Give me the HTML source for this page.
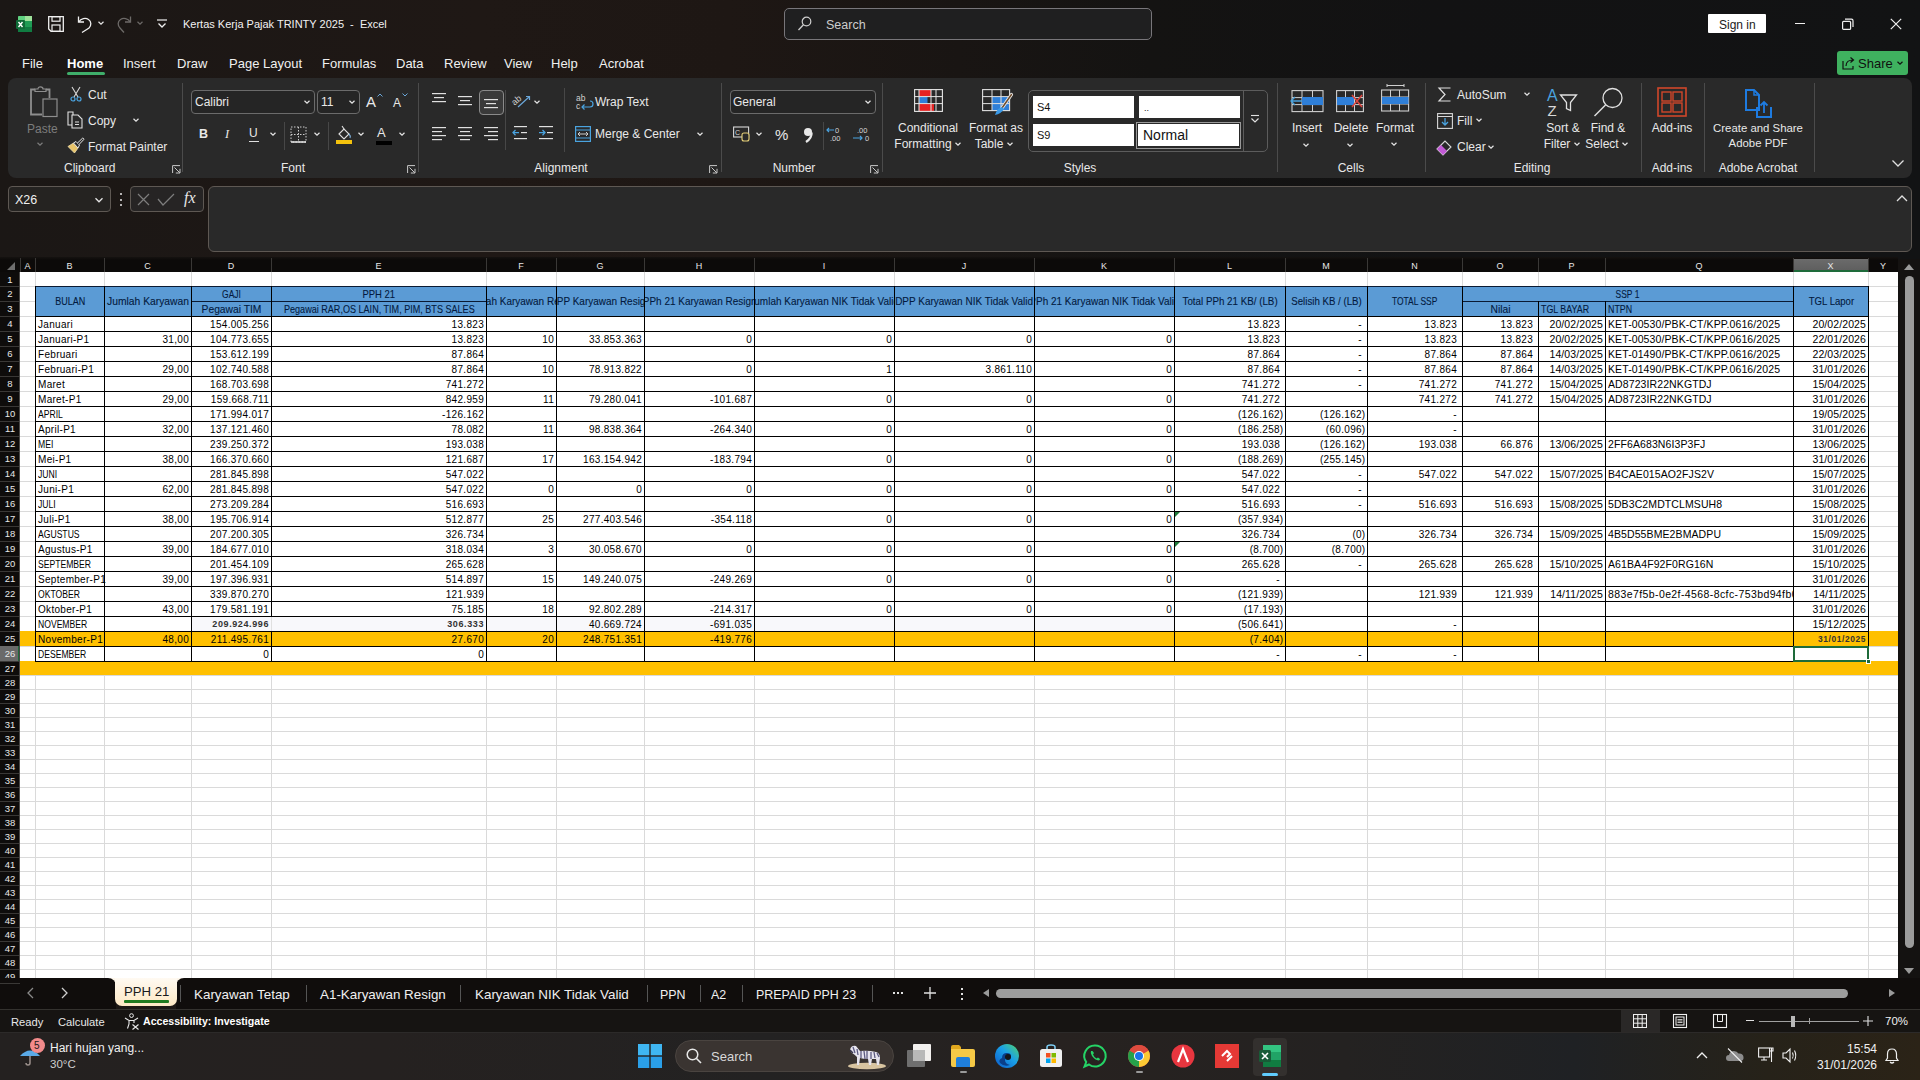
<!DOCTYPE html>
<html><head><meta charset="utf-8"><title>Excel</title>
<style>
html,body{margin:0;padding:0;}
body{width:1920px;height:1080px;overflow:hidden;position:relative;background:#1c1816;font-family:"Liberation Sans", sans-serif;}
div{position:absolute;box-sizing:border-box;}
.t{white-space:nowrap;line-height:1;}
.w{color:#ffffff;}
.c{white-space:nowrap;line-height:1;font-size:10px;letter-spacing:0.3px;color:#000;}
.ch{white-space:nowrap;line-height:1;font-size:10px;color:#e8e8e8;text-align:center;}
.rh{white-space:nowrap;line-height:1;font-size:10px;color:#e8e8e8;text-align:center;width:20px;}
svg{position:absolute;overflow:visible;}
</style></head><body>

<div style="left:0px;top:0px;width:1920px;height:1080px;background:linear-gradient(90deg,#1b1715 0%,#1f1815 25%,#1e1714 38%,#191513 50%,#141312 60%,#121213 75%,#121314 100%);"></div>
<svg style="left:16px;top:16px" width="16" height="16" viewBox="0 0 16 16"><rect x="2" y="0" width="14" height="16" rx="1.5" fill="#1f9d55"/><rect x="2" y="0" width="14" height="5" rx="1" fill="#5fd07f"/><rect x="9" y="0" width="7" height="5" fill="#9ee29a"/><rect x="2" y="11" width="14" height="5" fill="#107c41"/><rect x="0" y="4" width="9" height="9" rx="1" fill="#0f6b37"/><path d="M2.5 6L6.5 11M6.5 6L2.5 11" stroke="#fff" stroke-width="1.4"/></svg>
<svg style="left:48px;top:16px" width="16" height="16" viewBox="0 0 16 16"><path d="M0.7 0.7H15.3V15.3H3L0.7 13Z" fill="none" stroke="#f0f0f0" stroke-width="1.3"/><rect x="4" y="0.7" width="8" height="4.5" fill="none" stroke="#f0f0f0" stroke-width="1.2"/><rect x="4" y="9" width="8" height="6.3" fill="none" stroke="#f0f0f0" stroke-width="1.2"/></svg>
<svg style="left:77px;top:15px" width="16" height="18" viewBox="0 0 16 18"><path d="M1.5 1.5V7H7" fill="none" stroke="#f0f0f0" stroke-width="1.3"/><path d="M1.8 6.8C4 3.5 8.5 2.5 11.5 4.5C14.5 6.5 14.5 10.5 12 13L5 17.5" fill="none" stroke="#f0f0f0" stroke-width="1.3"/></svg>
<svg style="left:96px;top:19px" width="10" height="8" viewBox="0 0 10 8"><path d="M2.5 2.75L5 5.25L7.5 2.75" fill="none" stroke="#e6e6e6" stroke-width="1.2"/></svg>
<svg style="left:116px;top:15px" width="16" height="18" viewBox="0 0 16 18"><path d="M14.5 1.5V7H9" fill="none" stroke="#6d6a68" stroke-width="1.3"/><path d="M14.2 6.8C12 3.5 7.5 2.5 4.5 4.5C1.5 6.5 1.5 10.5 4 13L8 17.5" fill="none" stroke="#6d6a68" stroke-width="1.3"/></svg>
<svg style="left:135px;top:19px" width="10" height="8" viewBox="0 0 10 8"><path d="M2.5 2.75L5 5.25L7.5 2.75" fill="none" stroke="#6d6a68" stroke-width="1.2"/></svg>
<svg style="left:156px;top:18px" width="12" height="12" viewBox="0 0 12 12"><path d="M1 2H11" stroke="#f0f0f0" stroke-width="1.2"/><path d="M2.5 5.5L6 9L9.5 5.5" fill="none" stroke="#f0f0f0" stroke-width="1.3"/></svg>
<div class="t" style="left:183px;top:19.2px;font-size:11px;color:#f2f2f2;white-space:pre;">Kertas Kerja Pajak TRINTY 2025  -  Excel</div>
<div style="left:784px;top:8px;width:368px;height:32px;border:1px solid #78767a;border-radius:5px;background:#1f1f20;"></div>
<svg style="left:797px;top:15px" width="16" height="18" viewBox="0 0 16 18"><circle cx="9.5" cy="6.5" r="4.3" fill="none" stroke="#cfcfcf" stroke-width="1.2"/><path d="M6.4 9.8L1.5 15" stroke="#cfcfcf" stroke-width="1.3"/></svg>
<div class="t" style="left:826px;top:18.5px;font-size:12.5px;color:#cdcdcd;">Search</div>
<div style="left:1708px;top:14px;width:58px;height:19px;background:#ffffff;border-radius:1px;"></div>
<div class="t" style="left:1719px;top:19.2px;font-size:12px;color:#1a1a1a;">Sign in</div>
<div style="left:1795px;top:23px;width:10px;height:1px;background:#f0f0f0;"></div>
<svg style="left:1842px;top:18px" width="12" height="12" viewBox="0 0 12 12"><rect x="0.6" y="3.4" width="8" height="8" rx="1" fill="none" stroke="#f0f0f0" stroke-width="1.2"/><path d="M3 1.2H9.5A1.6 1.6 0 0 1 11 2.8V9" fill="none" stroke="#f0f0f0" stroke-width="1.2"/></svg>
<svg style="left:1890px;top:18px" width="12" height="12" viewBox="0 0 12 12"><path d="M0.8 0.8L11.2 11.2M11.2 0.8L0.8 11.2" stroke="#f0f0f0" stroke-width="1.2"/></svg>
<div class="t" style="left:22px;top:57.3px;font-size:13px;color:#f0f0f0;">File</div>
<div class="t" style="left:67px;top:57.3px;font-size:13px;color:#ffffff;font-weight:bold;">Home</div>
<div class="t" style="left:123px;top:57.3px;font-size:13px;color:#f0f0f0;">Insert</div>
<div class="t" style="left:177px;top:57.3px;font-size:13px;color:#f0f0f0;">Draw</div>
<div class="t" style="left:229px;top:57.3px;font-size:13px;color:#f0f0f0;">Page Layout</div>
<div class="t" style="left:322px;top:57.3px;font-size:13px;color:#f0f0f0;">Formulas</div>
<div class="t" style="left:396px;top:57.3px;font-size:13px;color:#f0f0f0;">Data</div>
<div class="t" style="left:444px;top:57.3px;font-size:13px;color:#f0f0f0;">Review</div>
<div class="t" style="left:504px;top:57.3px;font-size:13px;color:#f0f0f0;">View</div>
<div class="t" style="left:551px;top:57.3px;font-size:13px;color:#f0f0f0;">Help</div>
<div class="t" style="left:599px;top:57.3px;font-size:13px;color:#f0f0f0;">Acrobat</div>
<div style="left:67px;top:72px;width:38px;height:3px;background:#3fae6a;border-radius:2px;"></div>
<div style="left:1837px;top:51px;width:71px;height:24px;background:#3fb15f;border-radius:3px;"></div>
<svg style="left:1842px;top:56px" width="14" height="14" viewBox="0 0 14 14"><path d="M1 5V13H11V10" fill="none" stroke="#111" stroke-width="1.2"/><path d="M4 10C4 6 7 4 11 4M8.5 1.5L11.5 4L8.5 6.5" fill="none" stroke="#111" stroke-width="1.2"/></svg>
<div class="t" style="left:1858px;top:57.3px;font-size:13px;color:#101010;">Share</div>
<svg style="left:1895px;top:59px" width="10" height="8" viewBox="0 0 10 8"><path d="M2.5 2.75L5 5.25L7.5 2.75" fill="none" stroke="#111" stroke-width="1.2"/></svg>
<div style="left:8px;top:78px;width:1904px;height:100px;background:#292929;border-radius:8px;"></div>
<div style="left:182px;top:83px;width:1px;height:89px;background:#4b4b4b;"></div>
<div style="left:418px;top:83px;width:1px;height:89px;background:#4b4b4b;"></div>
<div style="left:721px;top:83px;width:1px;height:89px;background:#4b4b4b;"></div>
<div style="left:882px;top:83px;width:1px;height:89px;background:#4b4b4b;"></div>
<div style="left:1277px;top:83px;width:1px;height:89px;background:#4b4b4b;"></div>
<div style="left:1425px;top:83px;width:1px;height:89px;background:#4b4b4b;"></div>
<div style="left:1641px;top:83px;width:1px;height:89px;background:#4b4b4b;"></div>
<div style="left:1704px;top:83px;width:1px;height:89px;background:#4b4b4b;"></div>
<div style="left:1814px;top:83px;width:1px;height:89px;background:#4b4b4b;"></div>
<svg style="left:29px;top:86px" width="30" height="33" viewBox="0 0 30 33"><path d="M6 5.5V3H9Q9 0.8 11.5 0.8Q14 0.8 14 3H17V5.5Z" fill="none" stroke="#8e8e8e" stroke-width="1.2"/><path d="M6 3.5H2V28.5H13M17 3.5H20.5V12" fill="none" stroke="#8e8e8e" stroke-width="1.8"/><rect x="14" y="13" width="14" height="17.5" fill="#292929" stroke="#8e8e8e" stroke-width="1.2"/></svg>
<div class="t" style="left:27px;top:123.2px;font-size:12px;color:#7c7c7c;">Paste</div>
<svg style="left:35px;top:140px" width="10" height="8" viewBox="0 0 10 8"><path d="M2.5 2.75L5 5.25L7.5 2.75" fill="none" stroke="#7c7c7c" stroke-width="1.2"/></svg>
<svg style="left:69px;top:86px" width="14" height="16" viewBox="0 0 14 16"><path d="M3 1L9 11M11 1L5 11" stroke="#d8d8d8" stroke-width="1.1"/><circle cx="4" cy="13" r="2" fill="none" stroke="#4aa3df" stroke-width="1.2"/><circle cx="10" cy="13" r="2" fill="none" stroke="#4aa3df" stroke-width="1.2"/></svg>
<div class="t" style="left:88px;top:89.2px;font-size:12px;color:#e8e8e8;">Cut</div>
<svg style="left:67px;top:111px" width="17" height="18" viewBox="0 0 17 18"><path d="M1 1H6V14H1Z" fill="none" stroke="#e0e0e0" stroke-width="1.1"/><path d="M5 4H11L15 8V17H5Z" fill="#292929" stroke="#e0e0e0" stroke-width="1.1"/><path d="M8 11H12M8 13.5H12" stroke="#e0e0e0" stroke-width="1"/></svg>
<div class="t" style="left:88px;top:115.2px;font-size:12px;color:#e8e8e8;">Copy</div>
<svg style="left:131px;top:116px" width="10" height="8" viewBox="0 0 10 8"><path d="M2.5 2.75L5 5.25L7.5 2.75" fill="none" stroke="#e6e6e6" stroke-width="1.2"/></svg>
<svg style="left:67px;top:137px" width="18" height="17" viewBox="0 0 18 17"><path d="M1 9.5L6.5 6L11 11L7.5 16Z" fill="#e9c46a" stroke="#f0e0b0" stroke-width="0.8"/><path d="M6.5 6L9 4.5L12.5 8L11 11Z" fill="#292929" stroke="#e8e8e8" stroke-width="1"/><path d="M10.5 6L15.5 1.2Q17 1 16.8 2.5L12 7.5" fill="#292929" stroke="#e8e8e8" stroke-width="1"/></svg>
<div class="t" style="left:88px;top:141.2px;font-size:12px;color:#e8e8e8;">Format Painter</div>
<div class="t" style="left:64px;top:162.2px;font-size:12px;color:#e8e8e8;">Clipboard</div>
<svg style="left:172px;top:165px" width="9" height="9" viewBox="0 0 9 9"><path d="M0.6 8V0.6H8" fill="none" stroke="#c8c8c8" stroke-width="1"/><path d="M2.5 2.5L7.8 7.8M8 3.8V8H3.8" fill="none" stroke="#c8c8c8" stroke-width="1"/></svg>
<div style="left:191px;top:90px;width:124px;height:24px;border:1px solid #6b6b6b;border-radius:4px;background:#252525;"></div>
<div class="t" style="left:195px;top:96.2px;font-size:12px;color:#e8e8e8;">Calibri</div>
<svg style="left:302px;top:98px" width="10" height="8" viewBox="0 0 10 8"><path d="M2.5 2.75L5 5.25L7.5 2.75" fill="none" stroke="#e6e6e6" stroke-width="1.2"/></svg>
<div style="left:317px;top:90px;width:43px;height:24px;border:1px solid #6b6b6b;border-radius:4px;background:#252525;"></div>
<div class="t" style="left:321px;top:96.2px;font-size:12px;color:#e8e8e8;">11</div>
<svg style="left:347px;top:98px" width="10" height="8" viewBox="0 0 10 8"><path d="M2.5 2.75L5 5.25L7.5 2.75" fill="none" stroke="#e6e6e6" stroke-width="1.2"/></svg>
<div class="t" style="left:366px;top:93.8px;font-size:15px;color:#e8e8e8;">A</div>
<svg style="left:377px;top:93px" width="6" height="4" viewBox="0 0 6 4"><path d="M0.5 3.5L3 1L5.5 3.5" fill="none" stroke="#6aa6d8" stroke-width="1"/></svg>
<div class="t" style="left:393px;top:97.2px;font-size:12px;color:#e8e8e8;">A</div>
<svg style="left:402px;top:93px" width="6" height="4" viewBox="0 0 6 4"><path d="M0.5 0.5L3 3L5.5 0.5" fill="none" stroke="#6aa6d8" stroke-width="1"/></svg>
<div class="t" style="left:199px;top:128.0px;font-size:12.5px;color:#e8e8e8;font-weight:bold;">B</div>
<div class="t" style="left:225px;top:128.0px;font-size:12.5px;color:#e8e8e8;font-style:italic;font-family:'Liberation Serif',serif;">I</div>
<div class="t" style="left:249px;top:127.2px;font-size:12px;color:#e8e8e8;">U</div>
<div style="left:249px;top:141px;width:10px;height:1px;background:#e0e0e0;"></div>
<svg style="left:268px;top:130px" width="10" height="8" viewBox="0 0 10 8"><path d="M2.5 2.75L5 5.25L7.5 2.75" fill="none" stroke="#e6e6e6" stroke-width="1.2"/></svg>
<div style="left:284px;top:122px;width:1px;height:28px;background:#474747;"></div>
<svg style="left:290px;top:126px" width="17" height="17" viewBox="0 0 17 17"><path d="M1 1H16V16H1Z" fill="none" stroke="#cfcfcf" stroke-width="1" stroke-dasharray="1.5 1.5"/><path d="M8.5 1V16M1 8.5H16" stroke="#cfcfcf" stroke-width="1" stroke-dasharray="1.5 1.5"/><path d="M1 16H16" stroke="#e8e8e8" stroke-width="1.5"/></svg>
<svg style="left:312px;top:130px" width="10" height="8" viewBox="0 0 10 8"><path d="M2.5 2.75L5 5.25L7.5 2.75" fill="none" stroke="#e6e6e6" stroke-width="1.2"/></svg>
<div style="left:328px;top:122px;width:1px;height:28px;background:#474747;"></div>
<svg style="left:335px;top:125px" width="18" height="20" viewBox="0 0 18 20"><path d="M4 9L9 4L14 9L9 14Z" fill="none" stroke="#e0e0e0" stroke-width="1.1"/><path d="M9 4L7 1" stroke="#e0e0e0" stroke-width="1.1"/><path d="M14 9Q16 11 15 13" fill="none" stroke="#7fb3de" stroke-width="1.1"/><rect x="1" y="15" width="16" height="4" fill="#f4c20d"/></svg>
<svg style="left:356px;top:130px" width="10" height="8" viewBox="0 0 10 8"><path d="M2.5 2.75L5 5.25L7.5 2.75" fill="none" stroke="#e6e6e6" stroke-width="1.2"/></svg>
<div class="t" style="left:377px;top:125.8px;font-size:13px;color:#e8e8e8;">A</div>
<div style="left:376px;top:141px;width:16px;height:4px;background:#000000;"></div>
<svg style="left:397px;top:130px" width="10" height="8" viewBox="0 0 10 8"><path d="M2.5 2.75L5 5.25L7.5 2.75" fill="none" stroke="#e6e6e6" stroke-width="1.2"/></svg>
<div class="t" style="left:143px;width:300px;text-align:center;top:162.2px;font-size:12px;color:#e8e8e8;">Font</div>
<svg style="left:407px;top:165px" width="9" height="9" viewBox="0 0 9 9"><path d="M0.6 8V0.6H8" fill="none" stroke="#c8c8c8" stroke-width="1"/><path d="M2.5 2.5L7.8 7.8M8 3.8V8H3.8" fill="none" stroke="#c8c8c8" stroke-width="1"/></svg>
<svg style="left:432px;top:93px" width="18" height="14" viewBox="0 0 18 14"><rect x="0" y="0" width="14" height="1.2" fill="#e0e0e0"/><rect x="2" y="4" width="10" height="1.2" fill="#e0e0e0"/><rect x="0" y="8" width="14" height="1.2" fill="#e0e0e0"/></svg>
<svg style="left:458px;top:96px" width="18" height="14" viewBox="0 0 18 14"><rect x="0" y="0" width="14" height="1.2" fill="#e0e0e0"/><rect x="2" y="4" width="10" height="1.2" fill="#e0e0e0"/><rect x="0" y="8" width="14" height="1.2" fill="#e0e0e0"/></svg>
<div style="left:479px;top:90px;width:25px;height:25px;border:1px solid #8a8a8a;border-radius:4px;background:#3a3a3a;"></div>
<svg style="left:484px;top:99px" width="18" height="14" viewBox="0 0 18 14"><rect x="0" y="0" width="14" height="1.2" fill="#e0e0e0"/><rect x="2" y="4" width="10" height="1.2" fill="#e0e0e0"/><rect x="0" y="8" width="14" height="1.2" fill="#e0e0e0"/></svg>
<svg style="left:512px;top:93px" width="20" height="16" viewBox="0 0 20 16"><text x="0" y="10" font-size="9" fill="#cfcfcf" font-family="Liberation Sans" transform="rotate(-40 5 8)">ab</text><path d="M6 14L17 4M14 3.5H17.5V7" fill="none" stroke="#6aa6d8" stroke-width="1.2"/></svg>
<svg style="left:532px;top:98px" width="10" height="8" viewBox="0 0 10 8"><path d="M2.5 2.75L5 5.25L7.5 2.75" fill="none" stroke="#e6e6e6" stroke-width="1.2"/></svg>
<svg style="left:432px;top:127px" width="18" height="14" viewBox="0 0 18 14"><rect x="0" y="0" width="14" height="1.2" fill="#e0e0e0"/><rect x="0" y="4" width="10" height="1.2" fill="#e0e0e0"/><rect x="0" y="8" width="14" height="1.2" fill="#e0e0e0"/><rect x="0" y="12" width="10" height="1.2" fill="#e0e0e0"/></svg>
<svg style="left:458px;top:127px" width="18" height="14" viewBox="0 0 18 14"><rect x="0" y="0" width="14" height="1.2" fill="#e0e0e0"/><rect x="2" y="4" width="10" height="1.2" fill="#e0e0e0"/><rect x="0" y="8" width="14" height="1.2" fill="#e0e0e0"/><rect x="2" y="12" width="10" height="1.2" fill="#e0e0e0"/></svg>
<svg style="left:484px;top:127px" width="18" height="14" viewBox="0 0 18 14"><rect x="0" y="0" width="14" height="1.2" fill="#e0e0e0"/><rect x="4" y="4" width="10" height="1.2" fill="#e0e0e0"/><rect x="0" y="8" width="14" height="1.2" fill="#e0e0e0"/><rect x="4" y="12" width="10" height="1.2" fill="#e0e0e0"/></svg>
<div style="left:505px;top:90px;width:1px;height:60px;background:#474747;"></div>
<svg style="left:512px;top:126px" width="16" height="14" viewBox="0 0 16 14"><rect x="2" y="0" width="13" height="1.2" fill="#e0e0e0"/><rect x="9" y="6" width="6" height="1.2" fill="#e0e0e0"/><rect x="2" y="12" width="13" height="1.2" fill="#e0e0e0"/><path d="M7 6.6H1M3.5 4L1 6.6L3.5 9.2" fill="none" stroke="#4aa3df" stroke-width="1.3"/></svg>
<svg style="left:538px;top:126px" width="16" height="14" viewBox="0 0 16 14"><rect x="1" y="0" width="14" height="1.2" fill="#e0e0e0"/><rect x="9" y="6" width="6" height="1.2" fill="#e0e0e0"/><rect x="1" y="12" width="14" height="1.2" fill="#e0e0e0"/><path d="M1 6.6H7M4.5 4L7 6.6L4.5 9.2" fill="none" stroke="#4aa3df" stroke-width="1.3"/></svg>
<div style="left:564px;top:88px;width:1px;height:64px;background:#474747;"></div>
<svg style="left:576px;top:93px" width="18" height="17" viewBox="0 0 18 17"><text x="0" y="8" font-size="8.5" fill="#d0d0d0" font-family="Liberation Sans">ab</text><text x="0" y="16" font-size="8.5" fill="#d0d0d0" font-family="Liberation Sans">c</text><path d="M14 8Q17 8 17 11Q17 14 14 14H6M8.5 11.5L6 14L8.5 16.5" fill="none" stroke="#4aa3df" stroke-width="1.2"/></svg>
<div class="t" style="left:595px;top:96.2px;font-size:12px;color:#e8e8e8;">Wrap Text</div>
<svg style="left:575px;top:126px" width="16" height="16" viewBox="0 0 16 16"><rect x="0.6" y="0.6" width="14.8" height="14.8" fill="none" stroke="#4aa3df" stroke-width="1.2"/><path d="M0.6 4H15.4M0.6 12H15.4" stroke="#4aa3df" stroke-width="1"/><path d="M3 8H13M5 6L3 8L5 10M11 6L13 8L11 10" fill="none" stroke="#d0d0d0" stroke-width="1"/></svg>
<div class="t" style="left:595px;top:128.2px;font-size:12px;color:#e8e8e8;">Merge &amp; Center</div>
<svg style="left:695px;top:130px" width="10" height="8" viewBox="0 0 10 8"><path d="M2.5 2.75L5 5.25L7.5 2.75" fill="none" stroke="#e6e6e6" stroke-width="1.2"/></svg>
<div class="t" style="left:411px;width:300px;text-align:center;top:162.2px;font-size:12px;color:#e8e8e8;">Alignment</div>
<svg style="left:709px;top:165px" width="9" height="9" viewBox="0 0 9 9"><path d="M0.6 8V0.6H8" fill="none" stroke="#c8c8c8" stroke-width="1"/><path d="M2.5 2.5L7.8 7.8M8 3.8V8H3.8" fill="none" stroke="#c8c8c8" stroke-width="1"/></svg>
<div style="left:730px;top:90px;width:146px;height:24px;border:1px solid #6b6b6b;border-radius:4px;background:#252525;"></div>
<div class="t" style="left:733px;top:96.2px;font-size:12px;color:#e8e8e8;">General</div>
<svg style="left:863px;top:98px" width="10" height="8" viewBox="0 0 10 8"><path d="M2.5 2.75L5 5.25L7.5 2.75" fill="none" stroke="#e6e6e6" stroke-width="1.2"/></svg>
<svg style="left:733px;top:126px" width="18" height="16" viewBox="0 0 18 16"><rect x="0.6" y="1" width="15" height="10" fill="none" stroke="#d8d8d8" stroke-width="1.1"/><text x="2" y="9" font-size="7" fill="#d8d8d8" font-family="Liberation Sans">C</text><rect x="9" y="7" width="7" height="8" rx="2" fill="#292929" stroke="#e8d27a" stroke-width="1.1"/></svg>
<svg style="left:754px;top:130px" width="10" height="8" viewBox="0 0 10 8"><path d="M2.5 2.75L5 5.25L7.5 2.75" fill="none" stroke="#e6e6e6" stroke-width="1.2"/></svg>
<div class="t" style="left:775px;top:126.8px;font-size:15px;color:#e8e8e8;">%</div>
<svg style="left:802px;top:127px" width="12" height="16" viewBox="0 0 12 16"><circle cx="6" cy="5" r="4" fill="#e8e8e8"/><path d="M9.6 5.5Q10 11 4 15" fill="none" stroke="#e8e8e8" stroke-width="2.2"/></svg>
<div style="left:823px;top:122px;width:1px;height:28px;background:#474747;"></div>
<svg style="left:826px;top:126px" width="20" height="16" viewBox="0 0 20 16"><text x="9" y="7" font-size="7.5" fill="#d8d8d8" font-family="Liberation Sans">0</text><text x="4" y="15" font-size="7.5" fill="#d8d8d8" font-family="Liberation Sans">.00</text><path d="M8 4H1M3 2L1 4L3 6" fill="none" stroke="#4aa3df" stroke-width="1.2"/></svg>
<svg style="left:852px;top:126px" width="20" height="16" viewBox="0 0 20 16"><text x="5" y="7" font-size="7.5" fill="#d8d8d8" font-family="Liberation Sans">.00</text><text x="13" y="15" font-size="7.5" fill="#d8d8d8" font-family="Liberation Sans">0</text><path d="M1 12H10M8 10L10 12L8 14" fill="none" stroke="#4aa3df" stroke-width="1.2"/></svg>
<div class="t" style="left:644px;width:300px;text-align:center;top:162.2px;font-size:12px;color:#e8e8e8;">Number</div>
<svg style="left:870px;top:165px" width="9" height="9" viewBox="0 0 9 9"><path d="M0.6 8V0.6H8" fill="none" stroke="#c8c8c8" stroke-width="1"/><path d="M2.5 2.5L7.8 7.8M8 3.8V8H3.8" fill="none" stroke="#c8c8c8" stroke-width="1"/></svg>
<svg style="left:914px;top:89px" width="29" height="23" viewBox="0 0 29 23"><rect x="5" y="1" width="12" height="6.5" fill="#e52222"/><rect x="5" y="8" width="8.5" height="6.5" fill="#2f7fd8"/><rect x="5" y="15" width="15" height="7" fill="#e52222"/><rect x="0.6" y="0.6" width="27.8" height="21.8" fill="none" stroke="#e6e6e6" stroke-width="1.1"/><path d="M5 0.6V22.4M17 0.6V22.4M22 0.6V22.4M0.6 7.6H28.4M0.6 14.6H28.4" stroke="#e6e6e6" stroke-width="1"/></svg>
<div class="t" style="left:778px;width:300px;text-align:center;top:122.2px;font-size:12px;color:#e8e8e8;">Conditional</div>
<div class="t" style="left:773px;width:300px;text-align:center;top:137.7px;font-size:12px;color:#e8e8e8;">Formatting</div>
<svg style="left:953px;top:140px" width="10" height="8" viewBox="0 0 10 8"><path d="M2.5 2.75L5 5.25L7.5 2.75" fill="none" stroke="#e6e6e6" stroke-width="1.2"/></svg>
<svg style="left:982px;top:89px" width="31" height="28" viewBox="0 0 31 28"><rect x="10" y="8" width="18" height="14" fill="#2f7fd8"/><rect x="0.6" y="0.6" width="27" height="21" fill="none" stroke="#e0e0e0" stroke-width="1.1"/><path d="M10 0.6V21.6M19 0.6V21.6M0.6 7.6H27.6M0.6 14.6H27.6" stroke="#e0e0e0" stroke-width="1"/><path d="M29.5 5.5L20 19" stroke="#e8e8e8" stroke-width="3.2" stroke-linecap="round"/><path d="M29.5 5.5L20 19" stroke="#6b4a2a" stroke-width="1.4" stroke-linecap="round"/><path d="M20 18Q15 19 13 26Q19 25 22 20Z" fill="#3a9ae8"/></svg>
<div class="t" style="left:846px;width:300px;text-align:center;top:122.2px;font-size:12px;color:#e8e8e8;">Format as</div>
<div class="t" style="left:839px;width:300px;text-align:center;top:137.7px;font-size:12px;color:#e8e8e8;">Table</div>
<svg style="left:1005px;top:140px" width="10" height="8" viewBox="0 0 10 8"><path d="M2.5 2.75L5 5.25L7.5 2.75" fill="none" stroke="#e6e6e6" stroke-width="1.2"/></svg>
<div style="left:1028px;top:90px;width:240px;height:62px;border:1px solid #5c5c5c;border-radius:5px;"></div>
<div style="left:1033px;top:96px;width:101px;height:22px;background:#ffffff;"></div>
<div class="t" style="left:1037px;top:101.7px;font-size:11px;color:#111;">S4</div>
<div style="left:1139px;top:96px;width:101px;height:22px;background:#ffffff;"></div>
<div class="t" style="left:1144px;top:103.7px;font-size:9px;color:#111;">..</div>
<div style="left:1033px;top:124px;width:101px;height:22px;background:#ffffff;"></div>
<div class="t" style="left:1037px;top:129.7px;font-size:11px;color:#111;">S9</div>
<div style="left:1136px;top:122px;width:105px;height:27px;border:1px solid #9a9a9a;"></div>
<div style="left:1138px;top:124px;width:101px;height:22px;background:#ffffff;"></div>
<div class="t" style="left:1143px;top:128.3px;font-size:14px;color:#111;">Normal</div>
<div style="left:1243px;top:90px;width:1px;height:62px;background:#5c5c5c;"></div>
<svg style="left:1250px;top:114px" width="10" height="10" viewBox="0 0 10 10"><path d="M1 1.5H9" stroke="#e0e0e0" stroke-width="1.1"/><path d="M1.5 4.5L5 8L8.5 4.5" fill="none" stroke="#e0e0e0" stroke-width="1.2"/></svg>
<div class="t" style="left:930px;width:300px;text-align:center;top:162.2px;font-size:12px;color:#e8e8e8;">Styles</div>
<svg style="left:1290px;top:90px" width="34" height="22" viewBox="0 0 34 22"><rect x="2" y="0.6" width="31" height="21" fill="none" stroke="#d0d0d0" stroke-width="1.1"/><path d="M12 0.6V21.6M22.5 0.6V21.6M2 7.6H33M2 14.6H33" stroke="#d0d0d0" stroke-width="1"/><rect x="12" y="7" width="21" height="8" fill="#2f7fd8"/><path d="M12 11H1M5 7L1 11L5 15" fill="none" stroke="#4aa3df" stroke-width="1.3"/></svg>
<div class="t" style="left:1157px;width:300px;text-align:center;top:122.2px;font-size:12px;color:#e8e8e8;">Insert</div>
<svg style="left:1301px;top:141px" width="10" height="8" viewBox="0 0 10 8"><path d="M2.5 2.75L5 5.25L7.5 2.75" fill="none" stroke="#e6e6e6" stroke-width="1.2"/></svg>
<svg style="left:1336px;top:90px" width="28" height="22" viewBox="0 0 28 22"><rect x="0.6" y="0.6" width="26.8" height="21" fill="none" stroke="#d0d0d0" stroke-width="1.1"/><path d="M9.5 0.6V21.6M18.5 0.6V21.6M0.6 7.6H27.4M0.6 14.6H27.4" stroke="#d0d0d0" stroke-width="1"/><rect x="1" y="7" width="17" height="8" fill="#2f7fd8"/><path d="M16 5L26 17M26 5L16 17" stroke="#e0463f" stroke-width="1.5"/></svg>
<div class="t" style="left:1201px;width:300px;text-align:center;top:122.2px;font-size:12px;color:#e8e8e8;">Delete</div>
<svg style="left:1345px;top:141px" width="10" height="8" viewBox="0 0 10 8"><path d="M2.5 2.75L5 5.25L7.5 2.75" fill="none" stroke="#e6e6e6" stroke-width="1.2"/></svg>
<svg style="left:1381px;top:84px" width="29" height="28" viewBox="0 0 29 28"><path d="M6 1.5H23M6 0V3M23 0V3" stroke="#d0d0d0" stroke-width="1"/><rect x="0.6" y="6" width="27" height="21" fill="none" stroke="#d0d0d0" stroke-width="1.1"/><path d="M9.5 6V27M18.5 6V27M0.6 13H27.6M0.6 20H27.6" stroke="#d0d0d0" stroke-width="1"/><rect x="1" y="13" width="26.5" height="7" fill="#2f7fd8"/></svg>
<div class="t" style="left:1245px;width:300px;text-align:center;top:122.2px;font-size:12px;color:#e8e8e8;">Format</div>
<svg style="left:1389px;top:140px" width="10" height="8" viewBox="0 0 10 8"><path d="M2.5 2.75L5 5.25L7.5 2.75" fill="none" stroke="#e6e6e6" stroke-width="1.2"/></svg>
<div class="t" style="left:1201px;width:300px;text-align:center;top:162.2px;font-size:12px;color:#e8e8e8;">Cells</div>
<svg style="left:1438px;top:87px" width="14" height="15" viewBox="0 0 14 15"><path d="M12.5 1H1L7 7.5L1 14H12.5" fill="none" stroke="#e0e0e0" stroke-width="1.2"/></svg>
<div class="t" style="left:1457px;top:89.2px;font-size:12px;color:#e8e8e8;">AutoSum</div>
<svg style="left:1522px;top:90px" width="10" height="8" viewBox="0 0 10 8"><path d="M2.5 2.75L5 5.25L7.5 2.75" fill="none" stroke="#e6e6e6" stroke-width="1.2"/></svg>
<svg style="left:1437px;top:113px" width="16" height="16" viewBox="0 0 16 16"><rect x="0.6" y="0.6" width="14.8" height="14.8" fill="none" stroke="#d8d8d8" stroke-width="1.1"/><path d="M0.6 3.5H15.4" stroke="#d8d8d8" stroke-width="1"/><path d="M8 5V12M5 9L8 12L11 9" fill="none" stroke="#4aa3df" stroke-width="1.3"/></svg>
<div class="t" style="left:1457px;top:115.2px;font-size:12px;color:#e8e8e8;">Fill</div>
<svg style="left:1474px;top:116px" width="10" height="8" viewBox="0 0 10 8"><path d="M2.5 2.75L5 5.25L7.5 2.75" fill="none" stroke="#e6e6e6" stroke-width="1.2"/></svg>
<svg style="left:1436px;top:139px" width="16" height="16" viewBox="0 0 16 16"><path d="M1 10L9 2L15 8L7 16Z" fill="none" stroke="#d8d8d8" stroke-width="1.1"/><path d="M1 10L5 6L11 12L7 16Z" fill="#c25ad6"/></svg>
<div class="t" style="left:1457px;top:141.2px;font-size:12px;color:#e8e8e8;">Clear</div>
<svg style="left:1486px;top:143px" width="10" height="8" viewBox="0 0 10 8"><path d="M2.5 2.75L5 5.25L7.5 2.75" fill="none" stroke="#e6e6e6" stroke-width="1.2"/></svg>
<svg style="left:1547px;top:86px" width="32" height="31" viewBox="0 0 32 31"><text x="0" y="15" font-size="16" fill="#4aa3df" font-family="Liberation Sans">A</text><text x="0.5" y="30" font-size="15" fill="#d8d8d8" font-family="Liberation Sans">Z</text><path d="M13.5 9H29.5L23.5 16.5V24.5L19.5 22.5V16.5Z" fill="none" stroke="#e0e0e0" stroke-width="1.3"/></svg>
<div class="t" style="left:1413px;width:300px;text-align:center;top:122.2px;font-size:12px;color:#e8e8e8;">Sort &amp;</div>
<div class="t" style="left:1407px;width:300px;text-align:center;top:137.7px;font-size:12px;color:#e8e8e8;">Filter</div>
<svg style="left:1572px;top:140px" width="10" height="8" viewBox="0 0 10 8"><path d="M2.5 2.75L5 5.25L7.5 2.75" fill="none" stroke="#e6e6e6" stroke-width="1.2"/></svg>
<svg style="left:1593px;top:87px" width="32" height="31" viewBox="0 0 32 31"><circle cx="19.5" cy="11" r="9.5" fill="none" stroke="#e0e0e0" stroke-width="1.3"/><path d="M12.5 18L1.5 29" stroke="#e0e0e0" stroke-width="1.4"/></svg>
<div class="t" style="left:1458px;width:300px;text-align:center;top:122.2px;font-size:12px;color:#e8e8e8;">Find &amp;</div>
<div class="t" style="left:1452px;width:300px;text-align:center;top:137.7px;font-size:12px;color:#e8e8e8;">Select</div>
<svg style="left:1620px;top:140px" width="10" height="8" viewBox="0 0 10 8"><path d="M2.5 2.75L5 5.25L7.5 2.75" fill="none" stroke="#e6e6e6" stroke-width="1.2"/></svg>
<div class="t" style="left:1382px;width:300px;text-align:center;top:162.2px;font-size:12px;color:#e8e8e8;">Editing</div>
<svg style="left:1657px;top:87px" width="30" height="30" viewBox="0 0 30 30"><rect x="1" y="1" width="28" height="28" fill="none" stroke="#d0462a" stroke-width="1.6"/><rect x="5" y="5" width="9" height="9" fill="none" stroke="#d0462a" stroke-width="1.4"/><rect x="16" y="5" width="9" height="9" fill="none" stroke="#d0462a" stroke-width="1.4"/><rect x="5" y="16" width="9" height="9" fill="none" stroke="#d0462a" stroke-width="1.4"/><rect x="16" y="16" width="9" height="9" fill="none" stroke="#d0462a" stroke-width="1.4"/></svg>
<div class="t" style="left:1522px;width:300px;text-align:center;top:122.2px;font-size:12px;color:#e8e8e8;">Add-ins</div>
<div class="t" style="left:1522px;width:300px;text-align:center;top:162.2px;font-size:12px;color:#e8e8e8;">Add-ins</div>
<svg style="left:1744px;top:89px" width="30" height="32" viewBox="0 0 30 32"><path d="M2 1H10L15 6V21H2Z" fill="none" stroke="#1e7be0" stroke-width="2"/><path d="M10 1V6H15" fill="none" stroke="#1e7be0" stroke-width="1.5"/><path d="M13 18V28H27V18" fill="none" stroke="#1e7be0" stroke-width="2"/><path d="M20 24V13M16.5 16.5L20 13L23.5 16.5" fill="none" stroke="#1e7be0" stroke-width="1.8"/></svg>
<div class="t" style="left:1608px;width:300px;text-align:center;top:122.5px;font-size:11.4px;color:#e8e8e8;">Create and Share</div>
<div class="t" style="left:1608px;width:300px;text-align:center;top:138.0px;font-size:11.4px;color:#e8e8e8;">Adobe PDF</div>
<div class="t" style="left:1608px;width:300px;text-align:center;top:162.2px;font-size:12px;color:#e8e8e8;">Adobe Acrobat</div>
<svg style="left:1891px;top:159px" width="14" height="9" viewBox="0 0 14 9"><path d="M1.5 1.5L7 7L12.5 1.5" fill="none" stroke="#e0e0e0" stroke-width="1.3"/></svg>
<div style="left:8px;top:186px;width:103px;height:26px;border:1px solid #5e5853;border-radius:4px;background:#252321;"></div>
<div class="t" style="left:15px;top:193.5px;font-size:12.5px;color:#f0f0f0;">X26</div>
<svg style="left:94px;top:196px" width="10" height="8" viewBox="0 0 10 8"><path d="M1.5 2.25L5 5.75L8.5 2.25" fill="none" stroke="#e6e6e6" stroke-width="1.3"/></svg>
<div style="left:119.5px;top:193px;width:2px;height:2px;background:#e8e8e8;border-radius:1px;"></div>
<div style="left:119.5px;top:198.5px;width:2px;height:2px;background:#e8e8e8;border-radius:1px;"></div>
<div style="left:119.5px;top:204px;width:2px;height:2px;background:#e8e8e8;border-radius:1px;"></div>
<div style="left:130px;top:186px;width:74px;height:26px;border:1px solid #5e5853;border-radius:4px;background:#262424;"></div>
<svg style="left:137px;top:193px" width="13" height="13" viewBox="0 0 13 13"><path d="M1 1L12 12M12 1L1 12" stroke="#7d7d7d" stroke-width="1.2"/></svg>
<svg style="left:157px;top:193px" width="18" height="13" viewBox="0 0 18 13"><path d="M1 6L6 12L17 1" fill="none" stroke="#7d7d7d" stroke-width="1.2"/></svg>
<div class="t" style="left:184px;top:190.3px;font-size:16px;color:#e8e8e8;font-family:'Liberation Serif',serif;font-style:italic;">fx</div>
<div style="left:208px;top:186px;width:1704px;height:66px;border:1px solid #5e5853;border-radius:6px;background:#292929;"></div>
<svg style="left:1896px;top:194px" width="12" height="8" viewBox="0 0 12 8"><path d="M1 7L6 2L11 7" fill="none" stroke="#e0e0e0" stroke-width="1.3"/></svg>
<div style="left:100px;top:978px;width:90px;height:10px;background:#fdf6ea;"></div>
<div style="left:0px;top:978px;width:116px;height:31px;background:#100d0c;border-top-right-radius:8px;"></div>
<div style="left:176px;top:978px;width:1744px;height:31px;background:#100d0c;border-top-left-radius:8px;"></div>
<svg style="left:26px;top:987px" width="10" height="12" viewBox="0 0 10 12"><path d="M7 1L2 6L7 11" fill="none" stroke="#8a8a8a" stroke-width="1.3"/></svg>
<svg style="left:59px;top:987px" width="10" height="12" viewBox="0 0 10 12"><path d="M3 1L8 6L3 11" fill="none" stroke="#cfcfcf" stroke-width="1.3"/></svg>
<div style="left:115px;top:978px;width:62px;height:28px;background:linear-gradient(#fffaf2,#fde8c4);border-radius:0 0 7px 7px;"></div>
<div style="left:124px;top:1000px;width:45px;height:3px;background:#1f7a1f;border-radius:1px;"></div>
<div class="t" style="left:124px;top:984.7px;font-size:13.2px;color:#1a1a1a;">PPH 21</div>
<div style="left:180px;top:985px;width:1px;height:17px;background:#555;"></div>
<div class="t" style="left:194px;top:987.6px;font-size:13.4px;color:#f0f0f0;">Karyawan Tetap</div>
<div style="left:306px;top:985px;width:1px;height:17px;background:#555;"></div>
<div class="t" style="left:320px;top:987.6px;font-size:13.4px;color:#f0f0f0;">A1-Karyawan Resign</div>
<div style="left:460px;top:985px;width:1px;height:17px;background:#555;"></div>
<div class="t" style="left:475px;top:987.6px;font-size:13.4px;color:#f0f0f0;">Karyawan NIK Tidak Valid</div>
<div style="left:647px;top:985px;width:1px;height:17px;background:#555;"></div>
<div class="t" style="left:660px;top:987.6px;font-size:13.4px;color:#f0f0f0;transform:scaleX(0.93);transform-origin:0 0;">PPN</div>
<div style="left:700px;top:985px;width:1px;height:17px;background:#555;"></div>
<div class="t" style="left:711px;top:987.6px;font-size:13.4px;color:#f0f0f0;transform:scaleX(0.93);transform-origin:0 0;">A2</div>
<div style="left:742px;top:985px;width:1px;height:17px;background:#555;"></div>
<div class="t" style="left:756px;top:987.6px;font-size:13.4px;color:#f0f0f0;transform:scaleX(0.93);transform-origin:0 0;">PREPAID PPH 23</div>
<div style="left:872px;top:985px;width:1px;height:17px;background:#555;"></div>
<div style="left:893px;top:992px;width:2px;height:2px;background:#e0e0e0;"></div>
<div style="left:897px;top:992px;width:2px;height:2px;background:#e0e0e0;"></div>
<div style="left:901px;top:992px;width:2px;height:2px;background:#e0e0e0;"></div>
<svg style="left:923px;top:986px" width="14" height="14" viewBox="0 0 14 14"><path d="M7 1V13M1 7H13" stroke="#e0e0e0" stroke-width="1.3"/></svg>
<div style="left:961px;top:988px;width:2px;height:2px;background:#e0e0e0;"></div>
<div style="left:961px;top:993px;width:2px;height:2px;background:#e0e0e0;"></div>
<div style="left:961px;top:998px;width:2px;height:2px;background:#e0e0e0;"></div>
<svg style="left:982px;top:988px" width="8" height="10" viewBox="0 0 8 10"><path d="M7 1L1 5L7 9Z" fill="#9a9a9a"/></svg>
<div style="left:996px;top:989px;width:852px;height:9px;background:#9d9d9d;border-radius:5px;"></div>
<svg style="left:1888px;top:988px" width="8" height="10" viewBox="0 0 8 10"><path d="M1 1L7 5L1 9Z" fill="#9a9a9a"/></svg>
<div style="left:0px;top:1009px;width:1920px;height:23px;background:#161412;border-top:1px solid #34322f;"></div>
<div class="t" style="left:11px;top:1016.9px;font-size:11.2px;color:#e8e8e8;">Ready</div>
<div class="t" style="left:58px;top:1016.9px;font-size:11.2px;color:#e8e8e8;">Calculate</div>
<svg style="left:124px;top:1013px" width="16" height="17" viewBox="0 0 16 17"><circle cx="7.5" cy="2.6" r="1.9" fill="none" stroke="#e8e8e8" stroke-width="1"/><path d="M1 5L5 7.5H10L14 5M5 7.5V11L3.5 15.5M10 7.5V10" fill="none" stroke="#e8e8e8" stroke-width="1.1"/><path d="M8.5 11.5L14.5 16.5M14.5 11.5L8.5 16.5" stroke="#e8e8e8" stroke-width="1.1"/></svg>
<div class="t" style="left:143px;top:1016.4px;font-size:10.6px;color:#ffffff;font-weight:bold;">Accessibility: Investigate</div>
<div style="left:1621px;top:1010px;width:39px;height:22px;background:#2a2827;"></div>
<svg style="left:1633px;top:1014px" width="14" height="14" viewBox="0 0 14 14"><rect x="0.5" y="0.5" width="13" height="13" fill="none" stroke="#f0f0f0" stroke-width="1"/><path d="M4.8 0.5V13.5M9.2 0.5V13.5M0.5 4.8H13.5M0.5 9.2H13.5" stroke="#f0f0f0" stroke-width="1"/></svg>
<svg style="left:1673px;top:1014px" width="14" height="14" viewBox="0 0 14 14"><rect x="0.5" y="0.5" width="13" height="13" fill="none" stroke="#f0f0f0" stroke-width="1.1"/><rect x="3" y="3" width="8" height="8" fill="none" stroke="#f0f0f0" stroke-width="1"/><path d="M4.5 5.5H9.5M4.5 7H9.5M4.5 8.5H9.5" stroke="#f0f0f0" stroke-width="0.8"/></svg>
<svg style="left:1713px;top:1014px" width="14" height="14" viewBox="0 0 14 14"><rect x="0.5" y="0.5" width="13" height="13" fill="none" stroke="#f0f0f0" stroke-width="1.1"/><path d="M4.5 0.5V7.5H9.5V0.5" fill="none" stroke="#f0f0f0" stroke-width="1"/></svg>
<div style="left:1746px;top:1020px;width:8px;height:1px;background:#e0e0e0;"></div>
<div style="left:1759px;top:1021px;width:100px;height:1px;background:#a0a0a0;"></div>
<div style="left:1791px;top:1016px;width:4px;height:11px;background:#b8b8b8;"></div>
<div style="left:1809px;top:1018px;width:1px;height:6px;background:#a0a0a0;"></div>
<svg style="left:1863px;top:1016px" width="10" height="10" viewBox="0 0 10 10"><path d="M5 0V10M0 5H10" stroke="#e0e0e0" stroke-width="1.1"/></svg>
<div class="t" style="left:1885px;top:1015.5px;font-size:11.5px;color:#f0f0f0;">70%</div>
<div style="left:0px;top:1032px;width:1920px;height:48px;background:linear-gradient(90deg,#242120 0%,#252120 20%,#232222 40%,#272220 55%,#242221 70%,#1f2124 82%,#262219 92%,#2b2317 100%);border-top:1px solid #2c2a29;"></div>
<svg style="left:18px;top:1044px" width="24" height="24" viewBox="0 0 24 24"><path d="M2 12Q12 1 22 12Z" fill="#5aa9e6"/><path d="M12 12V19Q12 21 10 21Q8 21 8 19" fill="none" stroke="#9a8f8a" stroke-width="1.5"/></svg>
<div style="left:30px;top:1038px;width:15px;height:15px;border-radius:50%;background:#f28b8b;"></div>
<div class="t" style="left:34px;top:1040.7px;font-size:10px;color:#1a1a1a;">5</div>
<div class="t" style="left:50px;top:1042.2px;font-size:12px;color:#f0f0f0;">Hari hujan yang...</div>
<div class="t" style="left:50px;top:1058.5px;font-size:11.5px;color:#cfcfcf;">30°C</div>
<svg style="left:638px;top:1044px" width="24" height="24" viewBox="0 0 24 24"><rect x="0" y="0" width="11.3" height="11.3" fill="#3fb6f2"/><rect x="12.7" y="0" width="11.3" height="11.3" fill="#3fb6f2"/><rect x="0" y="12.7" width="11.3" height="11.3" fill="#2a9fe8"/><rect x="12.7" y="12.7" width="11.3" height="11.3" fill="#2a9fe8"/></svg>
<div style="left:675px;top:1040px;width:219px;height:32px;background:#3a3431;border-radius:16px;border:1px solid #4a4440;"></div>
<svg style="left:686px;top:1048px" width="16" height="16" viewBox="0 0 16 16"><circle cx="6.5" cy="6.5" r="5.3" fill="none" stroke="#e8e8e8" stroke-width="1.5"/><path d="M10.5 10.5L15 15" stroke="#e8e8e8" stroke-width="1.6"/></svg>
<div class="t" style="left:711px;top:1050.3px;font-size:13px;color:#d8d8d8;">Search</div>
<svg style="left:844px;top:1041px" width="48" height="29" viewBox="0 0 48 29"><ellipse cx="23" cy="25" rx="19" ry="3.2" fill="#d8c4a0"/><path d="M6 9Q7 4 12 5L16 10Q24 9 32 11Q36 12 36 17L35 24H33L32 18L28 18L27 24H25L24 18Q19 18 16 17L15 24H13L13 16Q10 13 8 12Z" fill="#e6e4ee"/><path d="M9 6L11 12M13 8L14 14M17 10L17 17M20 10L21 18M23 10L23 18M27 11L27 18M30 11L31 17M33 12L35 16" stroke="#5d5a80" stroke-width="1.3"/><path d="M6 9L9 12" stroke="#3a3850" stroke-width="1.5"/></svg>
<svg style="left:906px;top:1043px" width="28" height="26" viewBox="0 0 28 26"><rect x="1" y="7" width="18" height="17" rx="1" fill="#6f6f6f"/><rect x="7" y="1" width="18" height="17" rx="1" fill="#f2f0ee"/><rect x="7" y="7" width="12" height="11" fill="#b8b8b8"/></svg>
<svg style="left:950px;top:1044px" width="26" height="24" viewBox="0 0 26 24"><path d="M1 3Q1 1 3 1H9L11 3V6H1Z" fill="#e0a81e"/><path d="M1 5H23Q25 5 25 7V21Q25 23 23 23H3Q1 23 1 21Z" fill="#f6c946"/><path d="M6 15Q6 13 8 13H18Q20 13 20 15V23H6Z" fill="#1f7fdc"/></svg>
<div style="left:960px;top:1071px;width:7px;height:2px;background:#9a9a9a;border-radius:1px;"></div>
<svg style="left:994px;top:1043px" width="26" height="26" viewBox="0 0 26 26"><defs><linearGradient id="eg" x1="0" y1="1" x2="1" y2="0"><stop offset="0" stop-color="#0c59c8"/><stop offset="0.55" stop-color="#1aa0e8"/><stop offset="1" stop-color="#52d66a"/></linearGradient></defs><circle cx="13" cy="13" r="12" fill="url(#eg)"/><path d="M8 15Q8 10 13 10Q17 10 17 13Q17 15 14 15Q11 15 11 17Q11 21 16 22Q10 24 6 20Q4 17 8 15Z" fill="#0a3f8a"/><circle cx="14" cy="14" r="3" fill="#14161a"/></svg>
<svg style="left:1039px;top:1044px" width="24" height="24" viewBox="0 0 24 24"><path d="M8 5V3Q8 1 12 1Q16 1 16 3V5" fill="none" stroke="#7fd0f7" stroke-width="1.5"/><rect x="1" y="5" width="22" height="18" rx="2.5" fill="#f0f0f0"/><rect x="7" y="9" width="4.5" height="4.5" fill="#f25022"/><rect x="12.5" y="9" width="4.5" height="4.5" fill="#7fba00"/><rect x="7" y="14.5" width="4.5" height="4.5" fill="#00a4ef"/><rect x="12.5" y="14.5" width="4.5" height="4.5" fill="#ffb900"/></svg>
<svg style="left:1083px;top:1044px" width="24" height="24" viewBox="0 0 24 24"><path d="M12 1.5A10.5 10.5 0 1 1 6 20.5L1.5 22.5L3.2 18A10.5 10.5 0 0 1 12 1.5Z" fill="none" stroke="#25d366" stroke-width="2"/><path d="M8 7Q7 9 9 12Q12 16 15.5 16.5Q17 16 17 15L15 13.5L13.5 14.5Q11 13 10 10.5L11 9L9.5 7Z" fill="#25d366"/></svg>
<svg style="left:1127px;top:1044px" width="24" height="24" viewBox="0 0 24 24"><circle cx="12" cy="12" r="11" fill="#dd4b3e"/><path d="M12 12L2.5 6.5A11 11 0 0 0 12 23Z" fill="#25a24a"/><path d="M12 12L12 23A11 11 0 0 0 21.5 6.5Z" fill="#fcc934"/><path d="M12 12L21.5 6.5A11 11 0 0 0 2.5 6.5Z" fill="#dd4b3e"/><circle cx="12" cy="12" r="5" fill="#fff"/><circle cx="12" cy="12" r="4" fill="#1a73e8"/></svg>
<div style="left:1136px;top:1071px;width:7px;height:2px;background:#9a9a9a;border-radius:1px;"></div>
<svg style="left:1171px;top:1044px" width="24" height="24" viewBox="0 0 24 24"><circle cx="12" cy="12" r="11.5" fill="#e8363f"/><path d="M7 18L12 5L17 18" fill="none" stroke="#fff" stroke-width="2.2"/></svg>
<svg style="left:1215px;top:1044px" width="24" height="24" viewBox="0 0 24 24"><rect x="0" y="0" width="24" height="24" fill="#e53935"/><path d="M7 12L12 7L15 10L12 13M12 17L17 12" fill="none" stroke="#fff" stroke-width="2"/></svg>
<div style="left:1253px;top:1038px;width:34px;height:38px;background:#33302e;border-radius:4px;"></div>
<svg style="left:1258px;top:1044px" width="24" height="24" viewBox="0 0 24 24"><rect x="5" y="1" width="18" height="22" rx="2" fill="#21a366"/><rect x="5" y="1" width="18" height="7" fill="#33c481"/><rect x="5" y="16" width="18" height="7" fill="#107c41"/><rect x="1" y="6" width="12" height="12" rx="1.5" fill="#185c37"/><path d="M4 9L10 15M10 9L4 15" stroke="#fff" stroke-width="1.6"/></svg>
<div style="left:1262px;top:1073px;width:16px;height:3px;background:#60cdff;border-radius:2px;"></div>
<svg style="left:1696px;top:1051px" width="12" height="8" viewBox="0 0 12 8"><path d="M1 7L6 2L11 7" fill="none" stroke="#f0f0f0" stroke-width="1.3"/></svg>
<svg style="left:1725px;top:1047px" width="20" height="17" viewBox="0 0 20 17"><path d="M4 14Q1 14 1 11Q1 8 4 8Q5 4 9 4Q12 4 13.5 6.5Q18 6 18.5 10Q19 14 15 14Z" fill="#8c8c8c"/><path d="M3 1.5L17 15.5" stroke="#f0f0f0" stroke-width="1.1"/></svg>
<svg style="left:1758px;top:1047px" width="17" height="17" viewBox="0 0 17 17"><rect x="0.6" y="1" width="11" height="9" fill="none" stroke="#f0f0f0" stroke-width="1.1"/><path d="M6 10V13M3 13H9M13.5 1V15M12 1H15V4H12" fill="none" stroke="#f0f0f0" stroke-width="1.1"/></svg>
<svg style="left:1782px;top:1047px" width="17" height="17" viewBox="0 0 17 17"><path d="M1 6H4L8 2V15L4 11H1Z" fill="none" stroke="#f0f0f0" stroke-width="1.1"/><path d="M10.5 5.5Q12 8.5 10.5 11.5M12.5 3.5Q15 8.5 12.5 13.5" fill="none" stroke="#f0f0f0" stroke-width="1.1"/></svg>
<div class="t" style="left:1800px;width:77px;text-align:right;top:1042.5px;font-size:12px;color:#f0f0f0;">15:54</div>
<div class="t" style="left:1800px;width:77px;text-align:right;top:1058.5px;font-size:12px;color:#f0f0f0;">31/01/2026</div>
<svg style="left:1885px;top:1048px" width="14" height="16" viewBox="0 0 14 16"><path d="M7 1Q2.5 1 2.5 6V10L1 12.5H13L11.5 10V6Q11.5 1 7 1Z" fill="none" stroke="#f0f0f0" stroke-width="1.2"/><path d="M5 14Q7 16 9 14" fill="none" stroke="#f0f0f0" stroke-width="1.2"/></svg>
<div style="left:0px;top:257px;width:1898px;height:15px;background:linear-gradient(#151210,#0c0a09 3px);"></div>
<div style="left:0px;top:272px;width:20px;height:706px;background:#0e0c0b;"></div>
<div style="left:20px;top:272px;width:1878px;height:706px;background:#ffffff;"></div>
<svg style="left:0;top:0" width="1920" height="1080" viewBox="0 0 1920 1080"><line x1="35.5" y1="272" x2="35.5" y2="978" stroke="#dadada" stroke-width="1"/><line x1="104.5" y1="272" x2="104.5" y2="978" stroke="#dadada" stroke-width="1"/><line x1="191.5" y1="272" x2="191.5" y2="978" stroke="#dadada" stroke-width="1"/><line x1="271.5" y1="272" x2="271.5" y2="978" stroke="#dadada" stroke-width="1"/><line x1="486.5" y1="272" x2="486.5" y2="978" stroke="#dadada" stroke-width="1"/><line x1="556.5" y1="272" x2="556.5" y2="978" stroke="#dadada" stroke-width="1"/><line x1="644.5" y1="272" x2="644.5" y2="978" stroke="#dadada" stroke-width="1"/><line x1="754.5" y1="272" x2="754.5" y2="978" stroke="#dadada" stroke-width="1"/><line x1="894.5" y1="272" x2="894.5" y2="978" stroke="#dadada" stroke-width="1"/><line x1="1034.5" y1="272" x2="1034.5" y2="978" stroke="#dadada" stroke-width="1"/><line x1="1174.5" y1="272" x2="1174.5" y2="978" stroke="#dadada" stroke-width="1"/><line x1="1285.5" y1="272" x2="1285.5" y2="978" stroke="#dadada" stroke-width="1"/><line x1="1367.5" y1="272" x2="1367.5" y2="978" stroke="#dadada" stroke-width="1"/><line x1="1462.5" y1="272" x2="1462.5" y2="978" stroke="#dadada" stroke-width="1"/><line x1="1538.5" y1="272" x2="1538.5" y2="978" stroke="#dadada" stroke-width="1"/><line x1="1605.5" y1="272" x2="1605.5" y2="978" stroke="#dadada" stroke-width="1"/><line x1="1793.5" y1="272" x2="1793.5" y2="978" stroke="#dadada" stroke-width="1"/><line x1="1868.5" y1="272" x2="1868.5" y2="978" stroke="#dadada" stroke-width="1"/><line x1="1898.5" y1="272" x2="1898.5" y2="978" stroke="#dadada" stroke-width="1"/><line x1="20" y1="286.5" x2="1898" y2="286.5" stroke="#dadada" stroke-width="1"/><line x1="20" y1="301.5" x2="1898" y2="301.5" stroke="#dadada" stroke-width="1"/><line x1="20" y1="316.5" x2="1898" y2="316.5" stroke="#dadada" stroke-width="1"/><line x1="20" y1="331.5" x2="1898" y2="331.5" stroke="#dadada" stroke-width="1"/><line x1="20" y1="346.5" x2="1898" y2="346.5" stroke="#dadada" stroke-width="1"/><line x1="20" y1="361.5" x2="1898" y2="361.5" stroke="#dadada" stroke-width="1"/><line x1="20" y1="376.5" x2="1898" y2="376.5" stroke="#dadada" stroke-width="1"/><line x1="20" y1="391.5" x2="1898" y2="391.5" stroke="#dadada" stroke-width="1"/><line x1="20" y1="406.5" x2="1898" y2="406.5" stroke="#dadada" stroke-width="1"/><line x1="20" y1="421.5" x2="1898" y2="421.5" stroke="#dadada" stroke-width="1"/><line x1="20" y1="436.5" x2="1898" y2="436.5" stroke="#dadada" stroke-width="1"/><line x1="20" y1="451.5" x2="1898" y2="451.5" stroke="#dadada" stroke-width="1"/><line x1="20" y1="466.5" x2="1898" y2="466.5" stroke="#dadada" stroke-width="1"/><line x1="20" y1="481.5" x2="1898" y2="481.5" stroke="#dadada" stroke-width="1"/><line x1="20" y1="496.5" x2="1898" y2="496.5" stroke="#dadada" stroke-width="1"/><line x1="20" y1="511.5" x2="1898" y2="511.5" stroke="#dadada" stroke-width="1"/><line x1="20" y1="526.5" x2="1898" y2="526.5" stroke="#dadada" stroke-width="1"/><line x1="20" y1="541.5" x2="1898" y2="541.5" stroke="#dadada" stroke-width="1"/><line x1="20" y1="556.5" x2="1898" y2="556.5" stroke="#dadada" stroke-width="1"/><line x1="20" y1="571.5" x2="1898" y2="571.5" stroke="#dadada" stroke-width="1"/><line x1="20" y1="586.5" x2="1898" y2="586.5" stroke="#dadada" stroke-width="1"/><line x1="20" y1="601.5" x2="1898" y2="601.5" stroke="#dadada" stroke-width="1"/><line x1="20" y1="616.5" x2="1898" y2="616.5" stroke="#dadada" stroke-width="1"/><line x1="20" y1="631.5" x2="1898" y2="631.5" stroke="#dadada" stroke-width="1"/><line x1="20" y1="646.5" x2="1898" y2="646.5" stroke="#dadada" stroke-width="1"/><line x1="20" y1="661.5" x2="1898" y2="661.5" stroke="#dadada" stroke-width="1"/><line x1="20" y1="675.5" x2="1898" y2="675.5" stroke="#dadada" stroke-width="1"/><line x1="20" y1="689.5" x2="1898" y2="689.5" stroke="#dadada" stroke-width="1"/><line x1="20" y1="703.5" x2="1898" y2="703.5" stroke="#dadada" stroke-width="1"/><line x1="20" y1="717.5" x2="1898" y2="717.5" stroke="#dadada" stroke-width="1"/><line x1="20" y1="731.5" x2="1898" y2="731.5" stroke="#dadada" stroke-width="1"/><line x1="20" y1="745.5" x2="1898" y2="745.5" stroke="#dadada" stroke-width="1"/><line x1="20" y1="759.5" x2="1898" y2="759.5" stroke="#dadada" stroke-width="1"/><line x1="20" y1="773.5" x2="1898" y2="773.5" stroke="#dadada" stroke-width="1"/><line x1="20" y1="787.5" x2="1898" y2="787.5" stroke="#dadada" stroke-width="1"/><line x1="20" y1="801.5" x2="1898" y2="801.5" stroke="#dadada" stroke-width="1"/><line x1="20" y1="815.5" x2="1898" y2="815.5" stroke="#dadada" stroke-width="1"/><line x1="20" y1="829.5" x2="1898" y2="829.5" stroke="#dadada" stroke-width="1"/><line x1="20" y1="843.5" x2="1898" y2="843.5" stroke="#dadada" stroke-width="1"/><line x1="20" y1="857.5" x2="1898" y2="857.5" stroke="#dadada" stroke-width="1"/><line x1="20" y1="871.5" x2="1898" y2="871.5" stroke="#dadada" stroke-width="1"/><line x1="20" y1="885.5" x2="1898" y2="885.5" stroke="#dadada" stroke-width="1"/><line x1="20" y1="899.5" x2="1898" y2="899.5" stroke="#dadada" stroke-width="1"/><line x1="20" y1="913.5" x2="1898" y2="913.5" stroke="#dadada" stroke-width="1"/><line x1="20" y1="927.5" x2="1898" y2="927.5" stroke="#dadada" stroke-width="1"/><line x1="20" y1="941.5" x2="1898" y2="941.5" stroke="#dadada" stroke-width="1"/><line x1="20" y1="955.5" x2="1898" y2="955.5" stroke="#dadada" stroke-width="1"/><line x1="20" y1="969.5" x2="1898" y2="969.5" stroke="#dadada" stroke-width="1"/></svg>
<div style="left:191px;top:616px;width:983px;height:15px;background:#f8f8fb;"></div>
<div style="left:20px;top:631px;width:1878px;height:15px;background:#ffc000;"></div>
<div style="left:20px;top:661px;width:1878px;height:14px;background:#ffc000;"></div>
<div style="left:35px;top:286px;width:1833px;height:30px;background:#5b9bd5;"></div>
<svg style="left:0;top:0" width="1920" height="1080" viewBox="0 0 1920 1080"><line x1="35" y1="286.5" x2="1868" y2="286.5" stroke="#0a1a33" stroke-width="1"/><line x1="35" y1="316.5" x2="1868" y2="316.5" stroke="#000" stroke-width="1"/><line x1="35" y1="331.5" x2="1868" y2="331.5" stroke="#000" stroke-width="1"/><line x1="35" y1="346.5" x2="1868" y2="346.5" stroke="#000" stroke-width="1"/><line x1="35" y1="361.5" x2="1868" y2="361.5" stroke="#000" stroke-width="1"/><line x1="35" y1="376.5" x2="1868" y2="376.5" stroke="#000" stroke-width="1"/><line x1="35" y1="391.5" x2="1868" y2="391.5" stroke="#000" stroke-width="1"/><line x1="35" y1="406.5" x2="1868" y2="406.5" stroke="#000" stroke-width="1"/><line x1="35" y1="421.5" x2="1868" y2="421.5" stroke="#000" stroke-width="1"/><line x1="35" y1="436.5" x2="1868" y2="436.5" stroke="#000" stroke-width="1"/><line x1="35" y1="451.5" x2="1868" y2="451.5" stroke="#000" stroke-width="1"/><line x1="35" y1="466.5" x2="1868" y2="466.5" stroke="#000" stroke-width="1"/><line x1="35" y1="481.5" x2="1868" y2="481.5" stroke="#000" stroke-width="1"/><line x1="35" y1="496.5" x2="1868" y2="496.5" stroke="#000" stroke-width="1"/><line x1="35" y1="511.5" x2="1868" y2="511.5" stroke="#000" stroke-width="1"/><line x1="35" y1="526.5" x2="1868" y2="526.5" stroke="#000" stroke-width="1"/><line x1="35" y1="541.5" x2="1868" y2="541.5" stroke="#000" stroke-width="1"/><line x1="35" y1="556.5" x2="1868" y2="556.5" stroke="#000" stroke-width="1"/><line x1="35" y1="571.5" x2="1868" y2="571.5" stroke="#000" stroke-width="1"/><line x1="35" y1="586.5" x2="1868" y2="586.5" stroke="#000" stroke-width="1"/><line x1="35" y1="601.5" x2="1868" y2="601.5" stroke="#000" stroke-width="1"/><line x1="35" y1="616.5" x2="1868" y2="616.5" stroke="#000" stroke-width="1"/><line x1="35" y1="631.5" x2="1868" y2="631.5" stroke="#000" stroke-width="1"/><line x1="35" y1="646.5" x2="1868" y2="646.5" stroke="#000" stroke-width="1"/><line x1="35" y1="661.5" x2="1868" y2="661.5" stroke="#000" stroke-width="1"/><line x1="191" y1="301.5" x2="486" y2="301.5" stroke="#0a1a33" stroke-width="1"/><line x1="1462" y1="301.5" x2="1793" y2="301.5" stroke="#0a1a33" stroke-width="1"/><line x1="35.5" y1="286" x2="35.5" y2="662" stroke="#000" stroke-width="1"/><line x1="104.5" y1="286" x2="104.5" y2="662" stroke="#000" stroke-width="1"/><line x1="191.5" y1="286" x2="191.5" y2="662" stroke="#000" stroke-width="1"/><line x1="271.5" y1="286" x2="271.5" y2="662" stroke="#000" stroke-width="1"/><line x1="486.5" y1="286" x2="486.5" y2="662" stroke="#000" stroke-width="1"/><line x1="556.5" y1="286" x2="556.5" y2="662" stroke="#000" stroke-width="1"/><line x1="644.5" y1="286" x2="644.5" y2="662" stroke="#000" stroke-width="1"/><line x1="754.5" y1="286" x2="754.5" y2="662" stroke="#000" stroke-width="1"/><line x1="894.5" y1="286" x2="894.5" y2="662" stroke="#000" stroke-width="1"/><line x1="1034.5" y1="286" x2="1034.5" y2="662" stroke="#000" stroke-width="1"/><line x1="1174.5" y1="286" x2="1174.5" y2="662" stroke="#000" stroke-width="1"/><line x1="1285.5" y1="286" x2="1285.5" y2="662" stroke="#000" stroke-width="1"/><line x1="1367.5" y1="286" x2="1367.5" y2="662" stroke="#000" stroke-width="1"/><line x1="1462.5" y1="286" x2="1462.5" y2="662" stroke="#000" stroke-width="1"/><line x1="1538.5" y1="301" x2="1538.5" y2="662" stroke="#000" stroke-width="1"/><line x1="1605.5" y1="301" x2="1605.5" y2="662" stroke="#000" stroke-width="1"/><line x1="1793.5" y1="286" x2="1793.5" y2="662" stroke="#000" stroke-width="1"/><line x1="1868.5" y1="286" x2="1868.5" y2="662" stroke="#000" stroke-width="1"/></svg>
<div style="left:271px;top:617px;width:1px;height:14px;background:#e0e0e0;"></div>
<div style="left:36px;top:287px;width:68px;height:29px;overflow:hidden;color:#031a40;font-size:10.3px;letter-spacing:0px;line-height:29px;white-space:nowrap;-webkit-text-stroke:0.1px #031a40;display:flex;justify-content:center;"><span style="display:inline-block;transform:scaleX(0.875);">BULAN</span></div>
<div style="left:105px;top:287px;width:86px;height:29px;overflow:hidden;color:#031a40;font-size:10.3px;letter-spacing:0px;line-height:29px;white-space:nowrap;-webkit-text-stroke:0.1px #031a40;display:flex;justify-content:center;"><span style="display:inline-block;transform:scaleX(1.0);">Jumlah Karyawan</span></div>
<div style="left:192px;top:288px;width:79px;height:14px;overflow:hidden;color:#031a40;font-size:10.3px;letter-spacing:0px;line-height:14px;white-space:nowrap;-webkit-text-stroke:0.1px #031a40;display:flex;justify-content:center;"><span style="display:inline-block;transform:scaleX(0.82);">GAJI</span></div>
<div style="left:192px;top:303px;width:79px;height:14px;overflow:hidden;color:#031a40;font-size:10.3px;letter-spacing:0px;line-height:14px;white-space:nowrap;-webkit-text-stroke:0.1px #031a40;display:flex;justify-content:center;"><span style="display:inline-block;transform:scaleX(1.0);">Pegawai TIM</span></div>
<div style="left:272px;top:288px;width:214px;height:14px;overflow:hidden;color:#031a40;font-size:10.3px;letter-spacing:0px;line-height:14px;white-space:nowrap;-webkit-text-stroke:0.1px #031a40;display:flex;justify-content:center;"><span style="display:inline-block;transform:scaleX(0.92);">PPH 21</span></div>
<div style="left:272px;top:303px;width:214px;height:14px;overflow:hidden;color:#031a40;font-size:10.3px;letter-spacing:0px;line-height:14px;white-space:nowrap;-webkit-text-stroke:0.1px #031a40;display:flex;justify-content:center;"><span style="display:inline-block;transform:scaleX(0.88);">Pegawai RAR,OS LAIN, TIM, PIM, BTS SALES</span></div>
<div style="left:487px;top:287px;width:69px;height:29px;overflow:hidden;color:#031a40;font-size:10.3px;letter-spacing:0px;line-height:29px;white-space:nowrap;-webkit-text-stroke:0.1px #031a40;display:flex;justify-content:center;"><span style="display:inline-block;transform:scaleX(0.97);">Jumlah Karyawan Resign</span></div>
<div style="left:557px;top:287px;width:87px;height:29px;overflow:hidden;color:#031a40;font-size:10.3px;letter-spacing:0px;line-height:29px;white-space:nowrap;-webkit-text-stroke:0.1px #031a40;display:flex;justify-content:center;"><span style="display:inline-block;transform:scaleX(0.97);">DPP Karyawan Resign</span></div>
<div style="left:645px;top:287px;width:109px;height:29px;overflow:hidden;color:#031a40;font-size:10.3px;letter-spacing:0px;line-height:29px;white-space:nowrap;-webkit-text-stroke:0.1px #031a40;display:flex;justify-content:center;"><span style="display:inline-block;transform:scaleX(0.97);">PPh 21 Karyawan Resign</span></div>
<div style="left:755px;top:287px;width:139px;height:29px;overflow:hidden;color:#031a40;font-size:10.3px;letter-spacing:0px;line-height:29px;white-space:nowrap;-webkit-text-stroke:0.1px #031a40;display:flex;justify-content:center;"><span style="display:inline-block;transform:scaleX(0.97);">Jumlah Karyawan NIK Tidak Valid</span></div>
<div style="left:895px;top:287px;width:139px;height:29px;overflow:hidden;color:#031a40;font-size:10.3px;letter-spacing:0px;line-height:29px;white-space:nowrap;-webkit-text-stroke:0.1px #031a40;display:flex;justify-content:center;"><span style="display:inline-block;transform:scaleX(0.97);">DPP Karyawan NIK Tidak Valid</span></div>
<div style="left:1035px;top:287px;width:139px;height:29px;overflow:hidden;color:#031a40;font-size:10.3px;letter-spacing:0px;line-height:29px;white-space:nowrap;-webkit-text-stroke:0.1px #031a40;display:flex;justify-content:center;"><span style="display:inline-block;transform:scaleX(0.97);">PPh 21 Karyawan NIK Tidak Valid</span></div>
<div style="left:1175px;top:287px;width:110px;height:29px;overflow:hidden;color:#031a40;font-size:10.3px;letter-spacing:0px;line-height:29px;white-space:nowrap;-webkit-text-stroke:0.1px #031a40;display:flex;justify-content:center;"><span style="display:inline-block;transform:scaleX(0.95);">Total PPh 21 KB/ (LB)</span></div>
<div style="left:1286px;top:287px;width:81px;height:29px;overflow:hidden;color:#031a40;font-size:10.3px;letter-spacing:0px;line-height:29px;white-space:nowrap;-webkit-text-stroke:0.1px #031a40;display:flex;justify-content:center;"><span style="display:inline-block;transform:scaleX(0.94);">Selisih KB / (LB)</span></div>
<div style="left:1368px;top:287px;width:94px;height:29px;overflow:hidden;color:#031a40;font-size:10.3px;letter-spacing:0px;line-height:29px;white-space:nowrap;-webkit-text-stroke:0.1px #031a40;display:flex;justify-content:center;"><span style="display:inline-block;transform:scaleX(0.82);">TOTAL SSP</span></div>
<div style="left:1463px;top:287.5px;width:330px;height:14.0px;overflow:hidden;color:#031a40;font-size:10.3px;letter-spacing:0px;line-height:14.0px;white-space:nowrap;-webkit-text-stroke:0.1px #031a40;display:flex;justify-content:center;"><span style="display:inline-block;transform:scaleX(0.82);">SSP 1</span></div>
<div style="left:1463px;top:303px;width:75px;height:14px;overflow:hidden;color:#031a40;font-size:10.3px;letter-spacing:0px;line-height:14px;white-space:nowrap;-webkit-text-stroke:0.1px #031a40;display:flex;justify-content:center;"><span style="display:inline-block;transform:scaleX(1.0);">Nilai</span></div>
<div style="left:1539px;top:303px;width:66px;height:14px;overflow:hidden;color:#031a40;font-size:10.3px;letter-spacing:0px;line-height:14px;white-space:nowrap;-webkit-text-stroke:0.1px #031a40;padding-left:2px;"><span style="display:inline-block;transform:scaleX(0.86);transform-origin:0 0;">TGL BAYAR</span></div>
<div style="left:1606px;top:303px;width:187px;height:14px;overflow:hidden;color:#031a40;font-size:10.3px;letter-spacing:0px;line-height:14px;white-space:nowrap;-webkit-text-stroke:0.1px #031a40;padding-left:2px;"><span style="display:inline-block;transform:scaleX(0.86);transform-origin:0 0;">NTPN</span></div>
<div style="left:1794px;top:287px;width:74px;height:29px;overflow:hidden;color:#031a40;font-size:10.3px;letter-spacing:0px;line-height:29px;white-space:nowrap;-webkit-text-stroke:0.1px #031a40;display:flex;justify-content:center;"><span style="display:inline-block;transform:scaleX(0.93);">TGL Lapor</span></div>
<div class="c" style="left:38px;top:320px;font-size:10px;">Januari</div>
<div class="c" style="left:191px;top:320px;width:78px;text-align:right;font-size:10px;">154.005.256</div>
<div class="c" style="left:271px;top:320px;width:213px;text-align:right;font-size:10px;">13.823</div>
<div class="c" style="left:1174px;top:320px;width:106px;text-align:right;font-size:10px;">13.823</div>
<div class="c" style="left:1285px;top:320px;width:77px;text-align:right;font-size:10px;">-</div>
<div class="c" style="left:1367px;top:320px;width:90px;text-align:right;font-size:10px;">13.823</div>
<div class="c" style="left:1462px;top:320px;width:71px;text-align:right;font-size:10px;">13.823</div>
<div class="c" style="left:1538px;top:319px;width:65px;text-align:right;font-size:10.5px;letter-spacing:0.1px;">20/02/2025</div>
<div class="c" style="left:1608px;top:319px;font-size:10.5px;letter-spacing:0.1px;width:185px;overflow:hidden;">KET-00530/PBK-CT/KPP.0616/2025</div>
<div class="c" style="left:1793px;top:319px;width:73px;text-align:right;font-size:10.5px;letter-spacing:0.1px;">20/02/2025</div>
<div class="c" style="left:38px;top:335px;font-size:10px;">Januari-P1</div>
<div class="c" style="left:104px;top:335px;width:85px;text-align:right;font-size:10px;">31,00</div>
<div class="c" style="left:191px;top:335px;width:78px;text-align:right;font-size:10px;">104.773.655</div>
<div class="c" style="left:271px;top:335px;width:213px;text-align:right;font-size:10px;">13.823</div>
<div class="c" style="left:486px;top:335px;width:68px;text-align:right;font-size:10px;">10</div>
<div class="c" style="left:556px;top:335px;width:86px;text-align:right;font-size:10px;">33.853.363</div>
<div class="c" style="left:644px;top:335px;width:108px;text-align:right;font-size:10px;">0</div>
<div class="c" style="left:754px;top:335px;width:138px;text-align:right;font-size:10px;">0</div>
<div class="c" style="left:894px;top:335px;width:138px;text-align:right;font-size:10px;">0</div>
<div class="c" style="left:1034px;top:335px;width:138px;text-align:right;font-size:10px;">0</div>
<div class="c" style="left:1174px;top:335px;width:106px;text-align:right;font-size:10px;">13.823</div>
<div class="c" style="left:1285px;top:335px;width:77px;text-align:right;font-size:10px;">-</div>
<div class="c" style="left:1367px;top:335px;width:90px;text-align:right;font-size:10px;">13.823</div>
<div class="c" style="left:1462px;top:335px;width:71px;text-align:right;font-size:10px;">13.823</div>
<div class="c" style="left:1538px;top:334px;width:65px;text-align:right;font-size:10.5px;letter-spacing:0.1px;">20/02/2025</div>
<div class="c" style="left:1608px;top:334px;font-size:10.5px;letter-spacing:0.1px;width:185px;overflow:hidden;">KET-00530/PBK-CT/KPP.0616/2025</div>
<div class="c" style="left:1793px;top:334px;width:73px;text-align:right;font-size:10.5px;letter-spacing:0.1px;">22/01/2026</div>
<div class="c" style="left:38px;top:350px;font-size:10px;">Februari</div>
<div class="c" style="left:191px;top:350px;width:78px;text-align:right;font-size:10px;">153.612.199</div>
<div class="c" style="left:271px;top:350px;width:213px;text-align:right;font-size:10px;">87.864</div>
<div class="c" style="left:1174px;top:350px;width:106px;text-align:right;font-size:10px;">87.864</div>
<div class="c" style="left:1285px;top:350px;width:77px;text-align:right;font-size:10px;">-</div>
<div class="c" style="left:1367px;top:350px;width:90px;text-align:right;font-size:10px;">87.864</div>
<div class="c" style="left:1462px;top:350px;width:71px;text-align:right;font-size:10px;">87.864</div>
<div class="c" style="left:1538px;top:349px;width:65px;text-align:right;font-size:10.5px;letter-spacing:0.1px;">14/03/2025</div>
<div class="c" style="left:1608px;top:349px;font-size:10.5px;letter-spacing:0.1px;width:185px;overflow:hidden;">KET-01490/PBK-CT/KPP.0616/2025</div>
<div class="c" style="left:1793px;top:349px;width:73px;text-align:right;font-size:10.5px;letter-spacing:0.1px;">22/03/2025</div>
<div class="c" style="left:38px;top:365px;font-size:10px;">Februari-P1</div>
<div class="c" style="left:104px;top:365px;width:85px;text-align:right;font-size:10px;">29,00</div>
<div class="c" style="left:191px;top:365px;width:78px;text-align:right;font-size:10px;">102.740.588</div>
<div class="c" style="left:271px;top:365px;width:213px;text-align:right;font-size:10px;">87.864</div>
<div class="c" style="left:486px;top:365px;width:68px;text-align:right;font-size:10px;">10</div>
<div class="c" style="left:556px;top:365px;width:86px;text-align:right;font-size:10px;">78.913.822</div>
<div class="c" style="left:644px;top:365px;width:108px;text-align:right;font-size:10px;">0</div>
<div class="c" style="left:754px;top:365px;width:138px;text-align:right;font-size:10px;">1</div>
<div class="c" style="left:894px;top:365px;width:138px;text-align:right;font-size:10px;">3.861.110</div>
<div class="c" style="left:1034px;top:365px;width:138px;text-align:right;font-size:10px;">0</div>
<div class="c" style="left:1174px;top:365px;width:106px;text-align:right;font-size:10px;">87.864</div>
<div class="c" style="left:1285px;top:365px;width:77px;text-align:right;font-size:10px;">-</div>
<div class="c" style="left:1367px;top:365px;width:90px;text-align:right;font-size:10px;">87.864</div>
<div class="c" style="left:1462px;top:365px;width:71px;text-align:right;font-size:10px;">87.864</div>
<div class="c" style="left:1538px;top:364px;width:65px;text-align:right;font-size:10.5px;letter-spacing:0.1px;">14/03/2025</div>
<div class="c" style="left:1608px;top:364px;font-size:10.5px;letter-spacing:0.1px;width:185px;overflow:hidden;">KET-01490/PBK-CT/KPP.0616/2025</div>
<div class="c" style="left:1793px;top:364px;width:73px;text-align:right;font-size:10.5px;letter-spacing:0.1px;">31/01/2026</div>
<div class="c" style="left:38px;top:380px;font-size:10px;">Maret</div>
<div class="c" style="left:191px;top:380px;width:78px;text-align:right;font-size:10px;">168.703.698</div>
<div class="c" style="left:271px;top:380px;width:213px;text-align:right;font-size:10px;">741.272</div>
<div class="c" style="left:1174px;top:380px;width:106px;text-align:right;font-size:10px;">741.272</div>
<div class="c" style="left:1285px;top:380px;width:77px;text-align:right;font-size:10px;">-</div>
<div class="c" style="left:1367px;top:380px;width:90px;text-align:right;font-size:10px;">741.272</div>
<div class="c" style="left:1462px;top:380px;width:71px;text-align:right;font-size:10px;">741.272</div>
<div class="c" style="left:1538px;top:379px;width:65px;text-align:right;font-size:10.5px;letter-spacing:0.1px;">15/04/2025</div>
<div class="c" style="left:1608px;top:379px;font-size:10.5px;letter-spacing:0.1px;width:185px;overflow:hidden;">AD8723IR22NKGTDJ</div>
<div class="c" style="left:1793px;top:379px;width:73px;text-align:right;font-size:10.5px;letter-spacing:0.1px;">15/04/2025</div>
<div class="c" style="left:38px;top:395px;font-size:10px;">Maret-P1</div>
<div class="c" style="left:104px;top:395px;width:85px;text-align:right;font-size:10px;">29,00</div>
<div class="c" style="left:191px;top:395px;width:78px;text-align:right;font-size:10px;">159.668.711</div>
<div class="c" style="left:271px;top:395px;width:213px;text-align:right;font-size:10px;">842.959</div>
<div class="c" style="left:486px;top:395px;width:68px;text-align:right;font-size:10px;">11</div>
<div class="c" style="left:556px;top:395px;width:86px;text-align:right;font-size:10px;">79.280.041</div>
<div class="c" style="left:644px;top:395px;width:108px;text-align:right;font-size:10px;">-101.687</div>
<div class="c" style="left:754px;top:395px;width:138px;text-align:right;font-size:10px;">0</div>
<div class="c" style="left:894px;top:395px;width:138px;text-align:right;font-size:10px;">0</div>
<div class="c" style="left:1034px;top:395px;width:138px;text-align:right;font-size:10px;">0</div>
<div class="c" style="left:1174px;top:395px;width:106px;text-align:right;font-size:10px;">741.272</div>
<div class="c" style="left:1367px;top:395px;width:90px;text-align:right;font-size:10px;">741.272</div>
<div class="c" style="left:1462px;top:395px;width:71px;text-align:right;font-size:10px;">741.272</div>
<div class="c" style="left:1538px;top:394px;width:65px;text-align:right;font-size:10.5px;letter-spacing:0.1px;">15/04/2025</div>
<div class="c" style="left:1608px;top:394px;font-size:10.5px;letter-spacing:0.1px;width:185px;overflow:hidden;">AD8723IR22NKGTDJ</div>
<div class="c" style="left:1793px;top:394px;width:73px;text-align:right;font-size:10.5px;letter-spacing:0.1px;">31/01/2026</div>
<div class="c" style="left:38px;top:410px;font-size:10px;letter-spacing:0;transform:scaleX(0.86);transform-origin:0 0;">APRIL</div>
<div class="c" style="left:191px;top:410px;width:78px;text-align:right;font-size:10px;">171.994.017</div>
<div class="c" style="left:271px;top:410px;width:213px;text-align:right;font-size:10px;">-126.162</div>
<div class="c" style="left:1174px;top:410px;width:109.5px;text-align:right;font-size:10px;">(126.162)</div>
<div class="c" style="left:1285px;top:410px;width:80.5px;text-align:right;font-size:10px;">(126.162)</div>
<div class="c" style="left:1367px;top:410px;width:90px;text-align:right;font-size:10px;">-</div>
<div class="c" style="left:1793px;top:409px;width:73px;text-align:right;font-size:10.5px;letter-spacing:0.1px;">19/05/2025</div>
<div class="c" style="left:38px;top:425px;font-size:10px;">April-P1</div>
<div class="c" style="left:104px;top:425px;width:85px;text-align:right;font-size:10px;">32,00</div>
<div class="c" style="left:191px;top:425px;width:78px;text-align:right;font-size:10px;">137.121.460</div>
<div class="c" style="left:271px;top:425px;width:213px;text-align:right;font-size:10px;">78.082</div>
<div class="c" style="left:486px;top:425px;width:68px;text-align:right;font-size:10px;">11</div>
<div class="c" style="left:556px;top:425px;width:86px;text-align:right;font-size:10px;">98.838.364</div>
<div class="c" style="left:644px;top:425px;width:108px;text-align:right;font-size:10px;">-264.340</div>
<div class="c" style="left:754px;top:425px;width:138px;text-align:right;font-size:10px;">0</div>
<div class="c" style="left:894px;top:425px;width:138px;text-align:right;font-size:10px;">0</div>
<div class="c" style="left:1034px;top:425px;width:138px;text-align:right;font-size:10px;">0</div>
<div class="c" style="left:1174px;top:425px;width:109.5px;text-align:right;font-size:10px;">(186.258)</div>
<div class="c" style="left:1285px;top:425px;width:80.5px;text-align:right;font-size:10px;">(60.096)</div>
<div class="c" style="left:1367px;top:425px;width:90px;text-align:right;font-size:10px;">-</div>
<div class="c" style="left:1793px;top:424px;width:73px;text-align:right;font-size:10.5px;letter-spacing:0.1px;">31/01/2026</div>
<div class="c" style="left:38px;top:440px;font-size:10px;letter-spacing:0;transform:scaleX(0.86);transform-origin:0 0;">MEI</div>
<div class="c" style="left:191px;top:440px;width:78px;text-align:right;font-size:10px;">239.250.372</div>
<div class="c" style="left:271px;top:440px;width:213px;text-align:right;font-size:10px;">193.038</div>
<div class="c" style="left:1174px;top:440px;width:106px;text-align:right;font-size:10px;">193.038</div>
<div class="c" style="left:1285px;top:440px;width:80.5px;text-align:right;font-size:10px;">(126.162)</div>
<div class="c" style="left:1367px;top:440px;width:90px;text-align:right;font-size:10px;">193.038</div>
<div class="c" style="left:1462px;top:440px;width:71px;text-align:right;font-size:10px;">66.876</div>
<div class="c" style="left:1538px;top:439px;width:65px;text-align:right;font-size:10.5px;letter-spacing:0.1px;">13/06/2025</div>
<div class="c" style="left:1608px;top:439px;font-size:10.5px;letter-spacing:0.1px;width:185px;overflow:hidden;">2FF6A683N6I3P3FJ</div>
<div class="c" style="left:1793px;top:439px;width:73px;text-align:right;font-size:10.5px;letter-spacing:0.1px;">13/06/2025</div>
<div class="c" style="left:38px;top:455px;font-size:10px;">Mei-P1</div>
<div class="c" style="left:104px;top:455px;width:85px;text-align:right;font-size:10px;">38,00</div>
<div class="c" style="left:191px;top:455px;width:78px;text-align:right;font-size:10px;">166.370.660</div>
<div class="c" style="left:271px;top:455px;width:213px;text-align:right;font-size:10px;">121.687</div>
<div class="c" style="left:486px;top:455px;width:68px;text-align:right;font-size:10px;">17</div>
<div class="c" style="left:556px;top:455px;width:86px;text-align:right;font-size:10px;">163.154.942</div>
<div class="c" style="left:644px;top:455px;width:108px;text-align:right;font-size:10px;">-183.794</div>
<div class="c" style="left:754px;top:455px;width:138px;text-align:right;font-size:10px;">0</div>
<div class="c" style="left:894px;top:455px;width:138px;text-align:right;font-size:10px;">0</div>
<div class="c" style="left:1034px;top:455px;width:138px;text-align:right;font-size:10px;">0</div>
<div class="c" style="left:1174px;top:455px;width:109.5px;text-align:right;font-size:10px;">(188.269)</div>
<div class="c" style="left:1285px;top:455px;width:80.5px;text-align:right;font-size:10px;">(255.145)</div>
<div class="c" style="left:1793px;top:454px;width:73px;text-align:right;font-size:10.5px;letter-spacing:0.1px;">31/01/2026</div>
<div class="c" style="left:38px;top:470px;font-size:10px;letter-spacing:0;transform:scaleX(0.86);transform-origin:0 0;">JUNI</div>
<div class="c" style="left:191px;top:470px;width:78px;text-align:right;font-size:10px;">281.845.898</div>
<div class="c" style="left:271px;top:470px;width:213px;text-align:right;font-size:10px;">547.022</div>
<div class="c" style="left:1174px;top:470px;width:106px;text-align:right;font-size:10px;">547.022</div>
<div class="c" style="left:1285px;top:470px;width:77px;text-align:right;font-size:10px;">-</div>
<div class="c" style="left:1367px;top:470px;width:90px;text-align:right;font-size:10px;">547.022</div>
<div class="c" style="left:1462px;top:470px;width:71px;text-align:right;font-size:10px;">547.022</div>
<div class="c" style="left:1538px;top:469px;width:65px;text-align:right;font-size:10.5px;letter-spacing:0.1px;">15/07/2025</div>
<div class="c" style="left:1608px;top:469px;font-size:10.5px;letter-spacing:0.1px;width:185px;overflow:hidden;">B4CAE015AO2FJS2V</div>
<div class="c" style="left:1793px;top:469px;width:73px;text-align:right;font-size:10.5px;letter-spacing:0.1px;">15/07/2025</div>
<div class="c" style="left:38px;top:485px;font-size:10px;">Juni-P1</div>
<div class="c" style="left:104px;top:485px;width:85px;text-align:right;font-size:10px;">62,00</div>
<div class="c" style="left:191px;top:485px;width:78px;text-align:right;font-size:10px;">281.845.898</div>
<div class="c" style="left:271px;top:485px;width:213px;text-align:right;font-size:10px;">547.022</div>
<div class="c" style="left:486px;top:485px;width:68px;text-align:right;font-size:10px;">0</div>
<div class="c" style="left:556px;top:485px;width:86px;text-align:right;font-size:10px;">0</div>
<div class="c" style="left:644px;top:485px;width:108px;text-align:right;font-size:10px;">0</div>
<div class="c" style="left:754px;top:485px;width:138px;text-align:right;font-size:10px;">0</div>
<div class="c" style="left:894px;top:485px;width:138px;text-align:right;font-size:10px;">0</div>
<div class="c" style="left:1034px;top:485px;width:138px;text-align:right;font-size:10px;">0</div>
<div class="c" style="left:1174px;top:485px;width:106px;text-align:right;font-size:10px;">547.022</div>
<div class="c" style="left:1285px;top:485px;width:77px;text-align:right;font-size:10px;">-</div>
<div class="c" style="left:1793px;top:484px;width:73px;text-align:right;font-size:10.5px;letter-spacing:0.1px;">31/01/2026</div>
<div class="c" style="left:38px;top:500px;font-size:10px;letter-spacing:0;transform:scaleX(0.86);transform-origin:0 0;">JULI</div>
<div class="c" style="left:191px;top:500px;width:78px;text-align:right;font-size:10px;">273.209.284</div>
<div class="c" style="left:271px;top:500px;width:213px;text-align:right;font-size:10px;">516.693</div>
<div class="c" style="left:1174px;top:500px;width:106px;text-align:right;font-size:10px;">516.693</div>
<div class="c" style="left:1285px;top:500px;width:77px;text-align:right;font-size:10px;">-</div>
<div class="c" style="left:1367px;top:500px;width:90px;text-align:right;font-size:10px;">516.693</div>
<div class="c" style="left:1462px;top:500px;width:71px;text-align:right;font-size:10px;">516.693</div>
<div class="c" style="left:1538px;top:499px;width:65px;text-align:right;font-size:10.5px;letter-spacing:0.1px;">15/08/2025</div>
<div class="c" style="left:1608px;top:499px;font-size:10.5px;letter-spacing:0.1px;width:185px;overflow:hidden;">5DB3C2MDTCLMSUH8</div>
<div class="c" style="left:1793px;top:499px;width:73px;text-align:right;font-size:10.5px;letter-spacing:0.1px;">15/08/2025</div>
<div class="c" style="left:38px;top:515px;font-size:10px;">Juli-P1</div>
<div class="c" style="left:104px;top:515px;width:85px;text-align:right;font-size:10px;">38,00</div>
<div class="c" style="left:191px;top:515px;width:78px;text-align:right;font-size:10px;">195.706.914</div>
<div class="c" style="left:271px;top:515px;width:213px;text-align:right;font-size:10px;">512.877</div>
<div class="c" style="left:486px;top:515px;width:68px;text-align:right;font-size:10px;">25</div>
<div class="c" style="left:556px;top:515px;width:86px;text-align:right;font-size:10px;">277.403.546</div>
<div class="c" style="left:644px;top:515px;width:108px;text-align:right;font-size:10px;">-354.118</div>
<div class="c" style="left:754px;top:515px;width:138px;text-align:right;font-size:10px;">0</div>
<div class="c" style="left:894px;top:515px;width:138px;text-align:right;font-size:10px;">0</div>
<div class="c" style="left:1034px;top:515px;width:138px;text-align:right;font-size:10px;">0</div>
<div class="c" style="left:1174px;top:515px;width:109.5px;text-align:right;font-size:10px;">(357.934)</div>
<div class="c" style="left:1793px;top:514px;width:73px;text-align:right;font-size:10.5px;letter-spacing:0.1px;">31/01/2026</div>
<div class="c" style="left:38px;top:530px;font-size:10px;letter-spacing:0;transform:scaleX(0.86);transform-origin:0 0;">AGUSTUS</div>
<div class="c" style="left:191px;top:530px;width:78px;text-align:right;font-size:10px;">207.200.305</div>
<div class="c" style="left:271px;top:530px;width:213px;text-align:right;font-size:10px;">326.734</div>
<div class="c" style="left:1174px;top:530px;width:106px;text-align:right;font-size:10px;">326.734</div>
<div class="c" style="left:1285px;top:530px;width:80.5px;text-align:right;font-size:10px;">(0)</div>
<div class="c" style="left:1367px;top:530px;width:90px;text-align:right;font-size:10px;">326.734</div>
<div class="c" style="left:1462px;top:530px;width:71px;text-align:right;font-size:10px;">326.734</div>
<div class="c" style="left:1538px;top:529px;width:65px;text-align:right;font-size:10.5px;letter-spacing:0.1px;">15/09/2025</div>
<div class="c" style="left:1608px;top:529px;font-size:10.5px;letter-spacing:0.1px;width:185px;overflow:hidden;">4B5D55BME2BMADPU</div>
<div class="c" style="left:1793px;top:529px;width:73px;text-align:right;font-size:10.5px;letter-spacing:0.1px;">15/09/2025</div>
<div class="c" style="left:38px;top:545px;font-size:10px;">Agustus-P1</div>
<div class="c" style="left:104px;top:545px;width:85px;text-align:right;font-size:10px;">39,00</div>
<div class="c" style="left:191px;top:545px;width:78px;text-align:right;font-size:10px;">184.677.010</div>
<div class="c" style="left:271px;top:545px;width:213px;text-align:right;font-size:10px;">318.034</div>
<div class="c" style="left:486px;top:545px;width:68px;text-align:right;font-size:10px;">3</div>
<div class="c" style="left:556px;top:545px;width:86px;text-align:right;font-size:10px;">30.058.670</div>
<div class="c" style="left:644px;top:545px;width:108px;text-align:right;font-size:10px;">0</div>
<div class="c" style="left:754px;top:545px;width:138px;text-align:right;font-size:10px;">0</div>
<div class="c" style="left:894px;top:545px;width:138px;text-align:right;font-size:10px;">0</div>
<div class="c" style="left:1034px;top:545px;width:138px;text-align:right;font-size:10px;">0</div>
<div class="c" style="left:1174px;top:545px;width:109.5px;text-align:right;font-size:10px;">(8.700)</div>
<div class="c" style="left:1285px;top:545px;width:80.5px;text-align:right;font-size:10px;">(8.700)</div>
<div class="c" style="left:1793px;top:544px;width:73px;text-align:right;font-size:10.5px;letter-spacing:0.1px;">31/01/2026</div>
<div class="c" style="left:38px;top:560px;font-size:10px;letter-spacing:0;transform:scaleX(0.86);transform-origin:0 0;">SEPTEMBER</div>
<div class="c" style="left:191px;top:560px;width:78px;text-align:right;font-size:10px;">201.454.109</div>
<div class="c" style="left:271px;top:560px;width:213px;text-align:right;font-size:10px;">265.628</div>
<div class="c" style="left:1174px;top:560px;width:106px;text-align:right;font-size:10px;">265.628</div>
<div class="c" style="left:1285px;top:560px;width:77px;text-align:right;font-size:10px;">-</div>
<div class="c" style="left:1367px;top:560px;width:90px;text-align:right;font-size:10px;">265.628</div>
<div class="c" style="left:1462px;top:560px;width:71px;text-align:right;font-size:10px;">265.628</div>
<div class="c" style="left:1538px;top:559px;width:65px;text-align:right;font-size:10.5px;letter-spacing:0.1px;">15/10/2025</div>
<div class="c" style="left:1608px;top:559px;font-size:10.5px;letter-spacing:0.1px;width:185px;overflow:hidden;">A61BA4F92F0RG16N</div>
<div class="c" style="left:1793px;top:559px;width:73px;text-align:right;font-size:10.5px;letter-spacing:0.1px;">15/10/2025</div>
<div class="c" style="left:38px;top:575px;font-size:10px;">September-P1</div>
<div class="c" style="left:104px;top:575px;width:85px;text-align:right;font-size:10px;">39,00</div>
<div class="c" style="left:191px;top:575px;width:78px;text-align:right;font-size:10px;">197.396.931</div>
<div class="c" style="left:271px;top:575px;width:213px;text-align:right;font-size:10px;">514.897</div>
<div class="c" style="left:486px;top:575px;width:68px;text-align:right;font-size:10px;">15</div>
<div class="c" style="left:556px;top:575px;width:86px;text-align:right;font-size:10px;">149.240.075</div>
<div class="c" style="left:644px;top:575px;width:108px;text-align:right;font-size:10px;">-249.269</div>
<div class="c" style="left:754px;top:575px;width:138px;text-align:right;font-size:10px;">0</div>
<div class="c" style="left:894px;top:575px;width:138px;text-align:right;font-size:10px;">0</div>
<div class="c" style="left:1034px;top:575px;width:138px;text-align:right;font-size:10px;">0</div>
<div class="c" style="left:1174px;top:575px;width:106px;text-align:right;font-size:10px;">-</div>
<div class="c" style="left:1793px;top:574px;width:73px;text-align:right;font-size:10.5px;letter-spacing:0.1px;">31/01/2026</div>
<div class="c" style="left:38px;top:590px;font-size:10px;letter-spacing:0;transform:scaleX(0.86);transform-origin:0 0;">OKTOBER</div>
<div class="c" style="left:191px;top:590px;width:78px;text-align:right;font-size:10px;">339.870.270</div>
<div class="c" style="left:271px;top:590px;width:213px;text-align:right;font-size:10px;">121.939</div>
<div class="c" style="left:1174px;top:590px;width:109.5px;text-align:right;font-size:10px;">(121.939)</div>
<div class="c" style="left:1367px;top:590px;width:90px;text-align:right;font-size:10px;">121.939</div>
<div class="c" style="left:1462px;top:590px;width:71px;text-align:right;font-size:10px;">121.939</div>
<div class="c" style="left:1538px;top:589px;width:65px;text-align:right;font-size:10.5px;letter-spacing:0.1px;">14/11/2025</div>
<div class="c" style="left:1608px;top:589px;font-size:10.5px;letter-spacing:0.4px;width:185px;overflow:hidden;">883e7f5b-0e2f-4568-8cfc-753bd94fb0</div>
<div class="c" style="left:1793px;top:589px;width:73px;text-align:right;font-size:10.5px;letter-spacing:0.1px;">14/11/2025</div>
<div class="c" style="left:38px;top:605px;font-size:10px;">Oktober-P1</div>
<div class="c" style="left:104px;top:605px;width:85px;text-align:right;font-size:10px;">43,00</div>
<div class="c" style="left:191px;top:605px;width:78px;text-align:right;font-size:10px;">179.581.191</div>
<div class="c" style="left:271px;top:605px;width:213px;text-align:right;font-size:10px;">75.185</div>
<div class="c" style="left:486px;top:605px;width:68px;text-align:right;font-size:10px;">18</div>
<div class="c" style="left:556px;top:605px;width:86px;text-align:right;font-size:10px;">92.802.289</div>
<div class="c" style="left:644px;top:605px;width:108px;text-align:right;font-size:10px;">-214.317</div>
<div class="c" style="left:754px;top:605px;width:138px;text-align:right;font-size:10px;">0</div>
<div class="c" style="left:894px;top:605px;width:138px;text-align:right;font-size:10px;">0</div>
<div class="c" style="left:1034px;top:605px;width:138px;text-align:right;font-size:10px;">0</div>
<div class="c" style="left:1174px;top:605px;width:109.5px;text-align:right;font-size:10px;">(17.193)</div>
<div class="c" style="left:1793px;top:604px;width:73px;text-align:right;font-size:10.5px;letter-spacing:0.1px;">31/01/2026</div>
<div class="c" style="left:38px;top:620px;font-size:10px;letter-spacing:0;transform:scaleX(0.86);transform-origin:0 0;">NOVEMBER</div>
<div class="c" style="left:191px;top:620px;width:78px;text-align:right;font-size:9px;font-weight:bold;color:#333;letter-spacing:0.6px;">209.924.996</div>
<div class="c" style="left:271px;top:620px;width:213px;text-align:right;font-size:9px;font-weight:bold;color:#333;letter-spacing:0.6px;">306.333</div>
<div class="c" style="left:556px;top:620px;width:86px;text-align:right;font-size:10px;">40.669.724</div>
<div class="c" style="left:644px;top:620px;width:108px;text-align:right;font-size:10px;">-691.035</div>
<div class="c" style="left:1174px;top:620px;width:109.5px;text-align:right;font-size:10px;">(506.641)</div>
<div class="c" style="left:1367px;top:620px;width:90px;text-align:right;font-size:10px;">-</div>
<div class="c" style="left:1793px;top:619px;width:73px;text-align:right;font-size:10.5px;letter-spacing:0.1px;">15/12/2025</div>
<div class="c" style="left:38px;top:635px;font-size:10px;">November-P1</div>
<div class="c" style="left:104px;top:635px;width:85px;text-align:right;font-size:10px;">48,00</div>
<div class="c" style="left:191px;top:635px;width:78px;text-align:right;font-size:10px;">211.495.761</div>
<div class="c" style="left:271px;top:635px;width:213px;text-align:right;font-size:10px;">27.670</div>
<div class="c" style="left:486px;top:635px;width:68px;text-align:right;font-size:10px;">20</div>
<div class="c" style="left:556px;top:635px;width:86px;text-align:right;font-size:10px;">248.751.351</div>
<div class="c" style="left:644px;top:635px;width:108px;text-align:right;font-size:10px;">-419.776</div>
<div class="c" style="left:1174px;top:635px;width:109.5px;text-align:right;font-size:10px;">(7.404)</div>
<div class="c" style="left:1793px;top:635px;width:73px;text-align:right;font-size:8.4px;font-weight:bold;color:#333;letter-spacing:0.6px;">31/01/2025</div>
<div class="c" style="left:38px;top:650px;font-size:10px;letter-spacing:0;transform:scaleX(0.86);transform-origin:0 0;">DESEMBER</div>
<div class="c" style="left:191px;top:650px;width:78px;text-align:right;font-size:10px;">0</div>
<div class="c" style="left:271px;top:650px;width:213px;text-align:right;font-size:10px;">0</div>
<div class="c" style="left:1174px;top:650px;width:106px;text-align:right;font-size:10px;">-</div>
<div class="c" style="left:1285px;top:650px;width:77px;text-align:right;font-size:10px;">-</div>
<div class="c" style="left:1367px;top:650px;width:90px;text-align:right;font-size:10px;">-</div>
<svg style="left:1175px;top:512px" width="6" height="6"><path d="M0 0H5L0 5Z" fill="#1f7a3a"/></svg>
<svg style="left:1175px;top:542px" width="6" height="6"><path d="M0 0H5L0 5Z" fill="#1f7a3a"/></svg>
<div style="left:20px;top:258px;width:1px;height:14px;background:#3a3836;"></div>
<div class="ch" style="left:20px;top:261.5px;width:15px;font-size:9px;">A</div>
<div style="left:35px;top:258px;width:1px;height:14px;background:#3a3836;"></div>
<div class="ch" style="left:35px;top:261.5px;width:69px;font-size:9px;">B</div>
<div style="left:104px;top:258px;width:1px;height:14px;background:#3a3836;"></div>
<div class="ch" style="left:104px;top:261.5px;width:87px;font-size:9px;">C</div>
<div style="left:191px;top:258px;width:1px;height:14px;background:#3a3836;"></div>
<div class="ch" style="left:191px;top:261.5px;width:80px;font-size:9px;">D</div>
<div style="left:271px;top:258px;width:1px;height:14px;background:#3a3836;"></div>
<div class="ch" style="left:271px;top:261.5px;width:215px;font-size:9px;">E</div>
<div style="left:486px;top:258px;width:1px;height:14px;background:#3a3836;"></div>
<div class="ch" style="left:486px;top:261.5px;width:70px;font-size:9px;">F</div>
<div style="left:556px;top:258px;width:1px;height:14px;background:#3a3836;"></div>
<div class="ch" style="left:556px;top:261.5px;width:88px;font-size:9px;">G</div>
<div style="left:644px;top:258px;width:1px;height:14px;background:#3a3836;"></div>
<div class="ch" style="left:644px;top:261.5px;width:110px;font-size:9px;">H</div>
<div style="left:754px;top:258px;width:1px;height:14px;background:#3a3836;"></div>
<div class="ch" style="left:754px;top:261.5px;width:140px;font-size:9px;">I</div>
<div style="left:894px;top:258px;width:1px;height:14px;background:#3a3836;"></div>
<div class="ch" style="left:894px;top:261.5px;width:140px;font-size:9px;">J</div>
<div style="left:1034px;top:258px;width:1px;height:14px;background:#3a3836;"></div>
<div class="ch" style="left:1034px;top:261.5px;width:140px;font-size:9px;">K</div>
<div style="left:1174px;top:258px;width:1px;height:14px;background:#3a3836;"></div>
<div class="ch" style="left:1174px;top:261.5px;width:111px;font-size:9px;">L</div>
<div style="left:1285px;top:258px;width:1px;height:14px;background:#3a3836;"></div>
<div class="ch" style="left:1285px;top:261.5px;width:82px;font-size:9px;">M</div>
<div style="left:1367px;top:258px;width:1px;height:14px;background:#3a3836;"></div>
<div class="ch" style="left:1367px;top:261.5px;width:95px;font-size:9px;">N</div>
<div style="left:1462px;top:258px;width:1px;height:14px;background:#3a3836;"></div>
<div class="ch" style="left:1462px;top:261.5px;width:76px;font-size:9px;">O</div>
<div style="left:1538px;top:258px;width:1px;height:14px;background:#3a3836;"></div>
<div class="ch" style="left:1538px;top:261.5px;width:67px;font-size:9px;">P</div>
<div style="left:1605px;top:258px;width:1px;height:14px;background:#3a3836;"></div>
<div class="ch" style="left:1605px;top:261.5px;width:188px;font-size:9px;">Q</div>
<div style="left:1793px;top:259px;width:75px;height:13px;background:linear-gradient(#6b6b6b,#5f5f5f);border-bottom:2px solid #1e6b3a;"></div>
<div style="left:1793px;top:258px;width:1px;height:14px;background:#3a3836;"></div>
<div class="ch" style="left:1793px;top:261.5px;width:75px;font-size:9px;">X</div>
<div style="left:1868px;top:258px;width:1px;height:14px;background:#3a3836;"></div>
<div class="ch" style="left:1868px;top:261.5px;width:30px;font-size:9px;">Y</div>
<svg style="left:0;top:259px" width="20" height="13"><path d="M15 3V11H7Z" fill="#6e6e6e"/></svg>
<div style="left:0;top:286px;width:20px;height:1px;background:#3a3836;"></div>
<div class="rh" style="left:0;top:274.5px;font-size:9.5px;">1</div>
<div style="left:0;top:301px;width:20px;height:1px;background:#3a3836;"></div>
<div class="rh" style="left:0;top:289.0px;font-size:9.5px;">2</div>
<div style="left:0;top:316px;width:20px;height:1px;background:#3a3836;"></div>
<div class="rh" style="left:0;top:304.0px;font-size:9.5px;">3</div>
<div style="left:0;top:331px;width:20px;height:1px;background:#3a3836;"></div>
<div class="rh" style="left:0;top:319.0px;font-size:9.5px;">4</div>
<div style="left:0;top:346px;width:20px;height:1px;background:#3a3836;"></div>
<div class="rh" style="left:0;top:334.0px;font-size:9.5px;">5</div>
<div style="left:0;top:361px;width:20px;height:1px;background:#3a3836;"></div>
<div class="rh" style="left:0;top:349.0px;font-size:9.5px;">6</div>
<div style="left:0;top:376px;width:20px;height:1px;background:#3a3836;"></div>
<div class="rh" style="left:0;top:364.0px;font-size:9.5px;">7</div>
<div style="left:0;top:391px;width:20px;height:1px;background:#3a3836;"></div>
<div class="rh" style="left:0;top:379.0px;font-size:9.5px;">8</div>
<div style="left:0;top:406px;width:20px;height:1px;background:#3a3836;"></div>
<div class="rh" style="left:0;top:394.0px;font-size:9.5px;">9</div>
<div style="left:0;top:421px;width:20px;height:1px;background:#3a3836;"></div>
<div class="rh" style="left:0;top:409.0px;font-size:9.5px;">10</div>
<div style="left:0;top:436px;width:20px;height:1px;background:#3a3836;"></div>
<div class="rh" style="left:0;top:424.0px;font-size:9.5px;">11</div>
<div style="left:0;top:451px;width:20px;height:1px;background:#3a3836;"></div>
<div class="rh" style="left:0;top:439.0px;font-size:9.5px;">12</div>
<div style="left:0;top:466px;width:20px;height:1px;background:#3a3836;"></div>
<div class="rh" style="left:0;top:454.0px;font-size:9.5px;">13</div>
<div style="left:0;top:481px;width:20px;height:1px;background:#3a3836;"></div>
<div class="rh" style="left:0;top:469.0px;font-size:9.5px;">14</div>
<div style="left:0;top:496px;width:20px;height:1px;background:#3a3836;"></div>
<div class="rh" style="left:0;top:484.0px;font-size:9.5px;">15</div>
<div style="left:0;top:511px;width:20px;height:1px;background:#3a3836;"></div>
<div class="rh" style="left:0;top:499.0px;font-size:9.5px;">16</div>
<div style="left:0;top:526px;width:20px;height:1px;background:#3a3836;"></div>
<div class="rh" style="left:0;top:514.0px;font-size:9.5px;">17</div>
<div style="left:0;top:541px;width:20px;height:1px;background:#3a3836;"></div>
<div class="rh" style="left:0;top:529.0px;font-size:9.5px;">18</div>
<div style="left:0;top:556px;width:20px;height:1px;background:#3a3836;"></div>
<div class="rh" style="left:0;top:544.0px;font-size:9.5px;">19</div>
<div style="left:0;top:571px;width:20px;height:1px;background:#3a3836;"></div>
<div class="rh" style="left:0;top:559.0px;font-size:9.5px;">20</div>
<div style="left:0;top:586px;width:20px;height:1px;background:#3a3836;"></div>
<div class="rh" style="left:0;top:574.0px;font-size:9.5px;">21</div>
<div style="left:0;top:601px;width:20px;height:1px;background:#3a3836;"></div>
<div class="rh" style="left:0;top:589.0px;font-size:9.5px;">22</div>
<div style="left:0;top:616px;width:20px;height:1px;background:#3a3836;"></div>
<div class="rh" style="left:0;top:604.0px;font-size:9.5px;">23</div>
<div style="left:0;top:631px;width:20px;height:1px;background:#3a3836;"></div>
<div class="rh" style="left:0;top:619.0px;font-size:9.5px;">24</div>
<div style="left:0;top:646px;width:20px;height:1px;background:#3a3836;"></div>
<div class="rh" style="left:0;top:634.0px;font-size:9.5px;">25</div>
<div style="left:0px;top:646px;width:20px;height:15px;background:#6a6a6a;border-right:2px solid #1e6b3a;"></div>
<div style="left:0;top:661px;width:20px;height:1px;background:#3a3836;"></div>
<div class="rh" style="left:0;top:649.0px;font-size:9.5px;">26</div>
<div style="left:0;top:675px;width:20px;height:1px;background:#3a3836;"></div>
<div class="rh" style="left:0;top:663.5px;font-size:9.5px;">27</div>
<div style="left:0;top:689px;width:20px;height:1px;background:#3a3836;"></div>
<div class="rh" style="left:0;top:677.5px;font-size:9.5px;">28</div>
<div style="left:0;top:703px;width:20px;height:1px;background:#3a3836;"></div>
<div class="rh" style="left:0;top:691.5px;font-size:9.5px;">29</div>
<div style="left:0;top:717px;width:20px;height:1px;background:#3a3836;"></div>
<div class="rh" style="left:0;top:705.5px;font-size:9.5px;">30</div>
<div style="left:0;top:731px;width:20px;height:1px;background:#3a3836;"></div>
<div class="rh" style="left:0;top:719.5px;font-size:9.5px;">31</div>
<div style="left:0;top:745px;width:20px;height:1px;background:#3a3836;"></div>
<div class="rh" style="left:0;top:733.5px;font-size:9.5px;">32</div>
<div style="left:0;top:759px;width:20px;height:1px;background:#3a3836;"></div>
<div class="rh" style="left:0;top:747.5px;font-size:9.5px;">33</div>
<div style="left:0;top:773px;width:20px;height:1px;background:#3a3836;"></div>
<div class="rh" style="left:0;top:761.5px;font-size:9.5px;">34</div>
<div style="left:0;top:787px;width:20px;height:1px;background:#3a3836;"></div>
<div class="rh" style="left:0;top:775.5px;font-size:9.5px;">35</div>
<div style="left:0;top:801px;width:20px;height:1px;background:#3a3836;"></div>
<div class="rh" style="left:0;top:789.5px;font-size:9.5px;">36</div>
<div style="left:0;top:815px;width:20px;height:1px;background:#3a3836;"></div>
<div class="rh" style="left:0;top:803.5px;font-size:9.5px;">37</div>
<div style="left:0;top:829px;width:20px;height:1px;background:#3a3836;"></div>
<div class="rh" style="left:0;top:817.5px;font-size:9.5px;">38</div>
<div style="left:0;top:843px;width:20px;height:1px;background:#3a3836;"></div>
<div class="rh" style="left:0;top:831.5px;font-size:9.5px;">39</div>
<div style="left:0;top:857px;width:20px;height:1px;background:#3a3836;"></div>
<div class="rh" style="left:0;top:845.5px;font-size:9.5px;">40</div>
<div style="left:0;top:871px;width:20px;height:1px;background:#3a3836;"></div>
<div class="rh" style="left:0;top:859.5px;font-size:9.5px;">41</div>
<div style="left:0;top:885px;width:20px;height:1px;background:#3a3836;"></div>
<div class="rh" style="left:0;top:873.5px;font-size:9.5px;">42</div>
<div style="left:0;top:899px;width:20px;height:1px;background:#3a3836;"></div>
<div class="rh" style="left:0;top:887.5px;font-size:9.5px;">43</div>
<div style="left:0;top:913px;width:20px;height:1px;background:#3a3836;"></div>
<div class="rh" style="left:0;top:901.5px;font-size:9.5px;">44</div>
<div style="left:0;top:927px;width:20px;height:1px;background:#3a3836;"></div>
<div class="rh" style="left:0;top:915.5px;font-size:9.5px;">45</div>
<div style="left:0;top:941px;width:20px;height:1px;background:#3a3836;"></div>
<div class="rh" style="left:0;top:929.5px;font-size:9.5px;">46</div>
<div style="left:0;top:955px;width:20px;height:1px;background:#3a3836;"></div>
<div class="rh" style="left:0;top:943.5px;font-size:9.5px;">47</div>
<div style="left:0;top:969px;width:20px;height:1px;background:#3a3836;"></div>
<div class="rh" style="left:0;top:957.5px;font-size:9.5px;">48</div>
<div style="left:0;top:983px;width:20px;height:1px;background:#3a3836;"></div>
<div class="rh" style="left:0;top:971.5px;font-size:9.5px;height:6.5px;overflow:hidden;">49</div>
<div style="left:19px;top:272px;width:1px;height:706px;background:#4a4846;"></div>
<div style="left:1793px;top:646px;width:76px;height:16px;border:2px solid #1e6b3a;"></div>
<div style="left:1866px;top:659px;width:5px;height:5px;background:#1e6b3a;border:1px solid #fff;"></div>
<div style="left:1898px;top:259px;width:22px;height:719px;background:#141211;"></div>
<svg style="left:1902px;top:262px" width="14" height="10"><path d="M2 8L7 2L12 8Z" fill="#9a9a9a"/></svg>
<div style="left:1905px;top:276px;width:9px;height:672px;background:#9b9b9b;border-radius:5px;"></div>
<svg style="left:1902px;top:966px" width="14" height="10"><path d="M2 2L7 8L12 2Z" fill="#9a9a9a"/></svg>
</body></html>
